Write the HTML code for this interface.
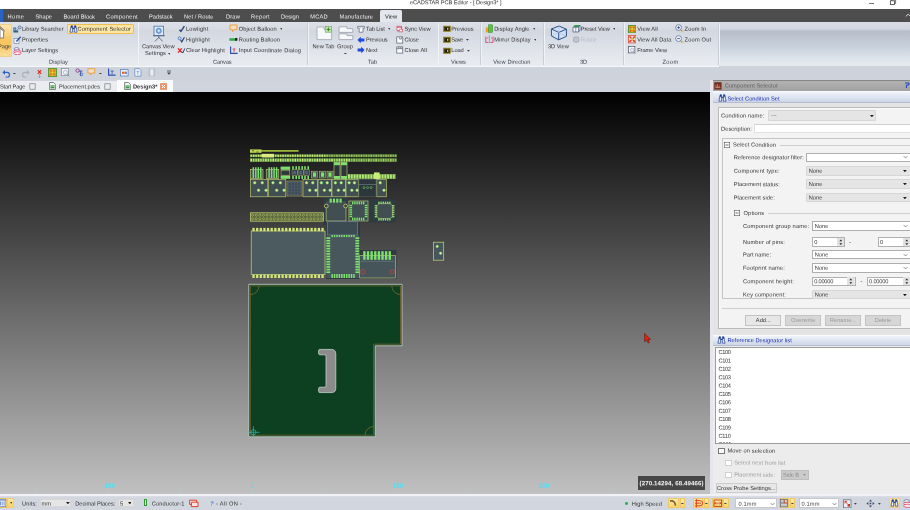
<!DOCTYPE html><html><head><meta charset="utf-8"><title>eCADSTAR PCB Editor</title><style>
*{box-sizing:border-box;margin:0;padding:0}
html,body{width:910px;height:510px;overflow:hidden;background:#fff}
body{font-family:"Liberation Sans",sans-serif;font-size:5.7px;color:#333;position:relative;line-height:1;filter:blur(0.4px)}
.t{-webkit-text-stroke:0}
.a{position:absolute;white-space:nowrap}
.t{position:absolute;white-space:nowrap;line-height:8px;height:8px;transform-origin:0 0}
.m{color:#f2f2f2}
.lbl{color:#3c424c}
.sep{position:absolute;top:23px;height:42px;width:0.8px;background:#c9cdd6;border-right:0.9px solid #f1f3f6;box-sizing:content-box}
.dd{position:absolute;background:#e5e5e5;border:1px solid #d6d6d6;border-radius:1px}
.cb{position:absolute;background:#fff;border:1px solid #adadad}
.btn{position:absolute;background:#e7e7e7;border:1px solid #c2c2c2;text-align:center;line-height:9.5px}
.dis{color:#9a9a9a}
.arr{position:absolute;width:0;height:0;border-left:1.9px solid transparent;border-right:1.9px solid transparent;border-top:2.3px solid #222}
.sarr{position:absolute;width:0;height:0;border-left:1.5px solid transparent;border-right:1.5px solid transparent;border-top:1.9px solid #3a3f4a}
.chk{position:absolute;width:6.4px;height:6.4px;background:#fff;border:1px solid #777}
</style></head><body>
<div class="a" style="left:0px;top:0px;width:910px;height:9px;background:#fff"></div>
<div class="t " style="left:410px;top:-2px;transform:translate(0.00px,0.20px) rotate(0.06deg);letter-spacing:-0.076px;color:#333">eCADSTAR PCB Editor - [ Design3* ]</div>
<div class="a" style="left:868.5px;top:2.9px;width:5.4px;height:0.8px;background:#777"></div>
<svg class="a" style="left:889px;top:-0.6px" width="9" height="7" viewBox="0 0 9 7"><rect x="1.4" y="1.8" width="4" height="3.8" fill="none" stroke="#444" stroke-width="0.8"/><path d="M2.6 1.8V0.8H6.6V4.4H5.4" fill="none" stroke="#444" stroke-width="0.7"/></svg>
<div class="a" style="left:0px;top:9px;width:910px;height:13px;background:#4d4d4d"></div>
<div class="a" style="left:0px;top:9px;width:2.5px;height:13px;background:#2b63c4"></div>
<div class="a" style="left:380px;top:10.3px;width:22.3px;height:12px;background:#e3e6ec;border-radius:1.5px 1.5px 0 0"></div>
<div class="t m" style="left:7px;top:12px;transform:translate(0.50px,0.60px) rotate(0.06deg);letter-spacing:0.457px;">Home</div>
<div class="t m" style="left:35px;top:12px;transform:translate(0.50px,0.60px) rotate(0.06deg);letter-spacing:0.009px;">Shape</div>
<div class="t m" style="left:63px;top:12px;transform:translate(0.50px,0.60px) rotate(0.06deg);letter-spacing:0.075px;">Board Block</div>
<div class="t m" style="left:106px;top:12px;transform:translate(0.00px,0.60px) rotate(0.06deg);letter-spacing:0.288px;">Component</div>
<div class="t m" style="left:149px;top:12px;transform:translate(0.00px,0.60px) rotate(0.06deg);letter-spacing:0.012px;">Padstack</div>
<div class="t m" style="left:184px;top:12px;transform:translate(0.00px,0.60px) rotate(0.06deg);letter-spacing:0.065px;">Net / Route</div>
<div class="t m" style="left:226px;top:12px;transform:translate(0.00px,0.60px) rotate(0.06deg);letter-spacing:0.180px;">Draw</div>
<div class="t m" style="left:251px;top:12px;transform:translate(0.00px,0.60px) rotate(0.06deg);letter-spacing:0.320px;">Report</div>
<div class="t m" style="left:281px;top:12px;transform:translate(0.00px,0.60px) rotate(0.06deg);letter-spacing:0.047px;">Design</div>
<div class="t m" style="left:310px;top:12px;transform:translate(0.30px,0.60px) rotate(0.06deg);letter-spacing:0.162px;">MCAD</div>
<div class="t m" style="left:339px;top:12px;transform:translate(0.60px,0.60px) rotate(0.06deg);letter-spacing:0.180px;">Manufacture</div>
<div class="t " style="left:385px;top:12px;transform:translate(0.00px,0.60px) rotate(0.06deg);letter-spacing:-0.059px;color:#222">View</div>
<svg class="a" style="left:905px;top:13.4px" width="7" height="5" viewBox="0 0 7 5"><path d="M0.8 3.4L3.2 1.2L5.6 3.4" fill="none" stroke="#d8d8d8" stroke-width="1"/></svg>
<div class="a" style="left:0px;top:22px;width:910px;height:44px;background:linear-gradient(#dde0e8 0%,#d9dce5 14%,#d3d7e0 20%,#dadee6 45%,#e3e6ec 75%,#e9ecf0 100%)"></div>
<div class="a" style="left:719px;top:22px;width:191px;height:44px;background:linear-gradient(#d9dae4 0%,#d4d7e1 16%,#b7bdc9 21%,#c0c8d4 40%,#cdd5e0 64%,#dde3ea 82%,#e5e9ee 95%)"></div>
<div class="sep" style="left:137.5px"></div>
<div class="sep" style="left:307px"></div>
<div class="sep" style="left:437.5px"></div>
<div class="sep" style="left:479.8px"></div>
<div class="sep" style="left:543px"></div>
<div class="sep" style="left:622.8px"></div>
<div class="sep" style="left:718px"></div>
<div class="a" style="left:0px;top:23.5px;width:11.5px;height:33.5px;background:linear-gradient(#fde6b4,#f9c762 45%,#f8c45c 60%,#fbdc98);border:1px solid #f0cf8c;border-left:0"></div>
<svg class="a" style="left:0;top:25px" width="6" height="15" viewBox="0 0 6 15"><path d="M0 3L3.6 6.4V13H0Z" fill="#fff" stroke="#555" stroke-width="0.7"/><path d="M0 1.5L4.6 6" stroke="#555" stroke-width="1" fill="none"/></svg>
<div class="t " style="left:0px;top:42px;transform:translate(0.00px,0.30px) rotate(0.06deg);margin-left:-2.5px">Page</div>
<div class="a" style="left:66.5px;top:23.5px;width:67.2px;height:10px;background:#fde6a4;border:0.6px solid #f0bd55;border-radius:1px"></div>
<svg class="a" style="left:13px;top:24.5px" width="9" height="8" viewBox="0 0 9 8"><path d="M0.4 2.6H3.2V5.6H5.2V7.6H0.4Z" fill="#2f5f80"/><rect x="1.2" y="3.4" width="1.4" height="2" fill="#9cc0d8"/><circle cx="6.6" cy="2.4" r="1.5" fill="#eef3fa" stroke="#3a5a9a" stroke-width="0.7"/><path d="M6.2 1.6V3H7.2" stroke="#3a5a9a" stroke-width="0.5" fill="none"/><path d="M5.4 3.6L4.4 4.8" stroke="#3a5a9a" stroke-width="0.8"/></svg>
<svg class="a" style="left:13px;top:35.5px" width="9" height="8" viewBox="0 0 9 8"><rect x="1" y="2.4" width="5" height="5" fill="#f4f6fa" stroke="#7b8aa6" stroke-width="0.7"/><path d="M3.4 5.4L7.6 0.8" stroke="#2d56a8" stroke-width="1.5"/></svg>
<svg class="a" style="left:12.5px;top:46.5px" width="9" height="8" viewBox="0 0 9 8"><ellipse cx="3.6" cy="2" rx="2.6" ry="1.4" fill="#eef2f8" stroke="#5a6aa0" stroke-width="0.7"/><ellipse cx="4.4" cy="4.4" rx="3.6" ry="1.5" fill="#fbeef0" stroke="#d8305a" stroke-width="0.7"/><ellipse cx="4.4" cy="6.2" rx="3.6" ry="1.5" fill="#fbeef0" stroke="#d8305a" stroke-width="0.7"/></svg>
<svg class="a" style="left:69px;top:24.5px" width="9" height="8" viewBox="0 0 9 8"><path d="M2.2 0.8L0.9 7.2H3.7L3.5 0.8ZM5.5 0.8L5.3 7.2H8.1L6.8 0.8Z" fill="#e4ecf8" stroke="#233f8c" stroke-width="0.7"/><path d="M2.1 0.8H3.5V2.8H1.7ZM5.5 0.8H6.9L7.3 2.8H5.5Z" fill="#233f8c"/><path d="M3.6 3.4H5.4" stroke="#233f8c" stroke-width="1.3"/></svg>
<div class="t " style="left:22px;top:24px;transform:translate(0.00px,0.75px) rotate(0.06deg);letter-spacing:-0.034px;">Library Searcher</div>
<div class="t " style="left:22px;top:35px;transform:translate(0.00px,0.40px) rotate(0.06deg);letter-spacing:0.008px;">Properties</div>
<div class="t " style="left:22px;top:46px;transform:translate(0.00px,0.10px) rotate(0.06deg);letter-spacing:-0.026px;">Layer Settings</div>
<div class="t " style="left:77px;top:24px;transform:translate(0.50px,0.75px) rotate(0.06deg);letter-spacing:0.091px;">Component Selector</div>
<div class="t lbl" style="left:49px;top:57px;transform:translate(0.00px,0.80px) rotate(0.06deg);letter-spacing:0.049px;">Display</div>
<svg class="a" style="left:152px;top:24.5px" width="14" height="17" viewBox="0 0 14 17"><rect x="2" y="1.2" width="9.6" height="9.4" fill="#dbe9f8" stroke="#4d74ad" stroke-width="0.8"/><circle cx="6.8" cy="5.8" r="2.6" fill="#7fb0e6" stroke="#3d6db3" stroke-width="0.6"/><circle cx="6.8" cy="5.8" r="1" fill="#eef5fc"/><path d="M1 10.8H12.8M6.8 10.8V13M6.8 12.4L3 16.4M6.8 12.4L10.6 16.4" stroke="#4a5a78" stroke-width="0.8" fill="none"/></svg>
<div class="t " style="left:142px;top:42px;transform:translate(0.00px,0.30px) rotate(0.06deg);letter-spacing:-0.054px;">Canvas View</div>
<div class="t " style="left:145px;top:49px;transform:translate(0.00px,0.00px) rotate(0.06deg);letter-spacing:0.055px;">Settings</div>
<svg class="a" style="left:167.50px;top:53.00px" width="2.8" height="1.8" viewBox="0 0 2.8 1.8"><path d="M0 0H2.8L1.4 1.8Z" fill="#3a3f4a"/></svg>
<svg class="a" style="left:177.5px;top:24.5px" width="8" height="8" viewBox="0 0 8 8"><path d="M1.4 4.8L2.9 6.3L6.4 1.2" stroke="#2c4474" stroke-width="1.4" fill="none"/></svg>
<svg class="a" style="left:177px;top:35.5px" width="9" height="8" viewBox="0 0 9 8"><circle cx="2.6" cy="2.4" r="1.5" fill="none" stroke="#4a78c8" stroke-width="0.9"/><path d="M3.6 4.2L4.8 5.8L7.4 1.2" stroke="#2c4474" stroke-width="1.2" fill="none"/></svg>
<svg class="a" style="left:176.5px;top:46.5px" width="9" height="8" viewBox="0 0 9 8"><path d="M1 1.4L4.8 5.6M4.8 1.4L1 5.6" stroke="#e0241c" stroke-width="1.4"/><path d="M4.8 4.6L5.8 6L7.8 1.4" stroke="#2c4474" stroke-width="1" fill="none"/></svg>
<div class="t " style="left:186px;top:24px;transform:translate(0.00px,0.75px) rotate(0.06deg);letter-spacing:0.203px;">Lowlight</div>
<div class="t " style="left:186px;top:35px;transform:translate(0.00px,0.40px) rotate(0.06deg);letter-spacing:0.207px;">Highlight</div>
<div class="t " style="left:186px;top:46px;transform:translate(0.00px,0.10px) rotate(0.06deg);letter-spacing:0.113px;">Clear Highlight</div>
<svg class="a" style="left:229px;top:24px" width="9" height="9" viewBox="0 0 9 9"><path d="M1 1H8V5.6H5L3.6 7.6L3.4 5.6H1Z" fill="#efe0c8" stroke="#f0a040" stroke-width="1"/></svg>
<svg class="a" style="left:229px;top:36px" width="9" height="7" viewBox="0 0 9 7"><rect x="0.4" y="2" width="6.4" height="2.8" rx="0.6" fill="#27a54a"/><path d="M0.8 2.7H6" stroke="#7fd890" stroke-width="0.6"/><rect x="6" y="2" width="2.4" height="2.8" rx="0.5" fill="#1c1c1c"/></svg>
<svg class="a" style="left:229px;top:46px" width="9" height="9" viewBox="0 0 9 9"><path d="M1.6 0.6V7.4H8.6" stroke="#2c4fa3" stroke-width="1.1" fill="none"/><path d="M3.6 3H6.6M5.1 3V6" stroke="#c03a5a" stroke-width="0.8"/></svg>
<div class="t " style="left:238px;top:24px;transform:translate(0.80px,0.75px) rotate(0.06deg);letter-spacing:0.071px;">Object Balloon</div>
<svg class="a" style="left:279.50px;top:28.00px" width="2.8" height="1.8" viewBox="0 0 2.8 1.8"><path d="M0 0H2.8L1.4 1.8Z" fill="#3a3f4a"/></svg>
<div class="t " style="left:238px;top:35px;transform:translate(0.80px,0.40px) rotate(0.06deg);letter-spacing:0.069px;">Routing Balloon</div>
<div class="t " style="left:238px;top:46px;transform:translate(0.80px,0.10px) rotate(0.06deg);letter-spacing:0.106px;">Input Coordinate Dialog</div>
<div class="t lbl" style="left:213px;top:57px;transform:translate(0.00px,0.80px) rotate(0.06deg);letter-spacing:-0.116px;">Canvas</div>
<svg class="a" style="left:316px;top:26px" width="17" height="15" viewBox="0 0 17 15"><path d="M1 1H8V3.4H15.6V13.6H1Z" fill="#f7f8fa" stroke="#a9adb6" stroke-width="0.9"/><rect x="9.2" y="0.6" width="6.4" height="5.6" fill="#bfe3a8" stroke="#69a84f" stroke-width="0.6"/><path d="M12.4 1.6V5.2M10.6 3.4H14.2" stroke="#2f8a2a" stroke-width="1"/></svg>
<svg class="a" style="left:337.5px;top:26px" width="16" height="15" viewBox="0 0 16 15"><path d="M1 0.8H9V2.6H14.8V6.4H1Z" fill="#f7f8fa" stroke="#a2a7b1" stroke-width="0.9"/><path d="M1 7.8H9V9.6H14.8V13.6H1Z" fill="#f7f8fa" stroke="#a2a7b1" stroke-width="0.9"/></svg>
<div class="t " style="left:312px;top:42px;transform:translate(0.50px,0.30px) rotate(0.06deg);letter-spacing:-0.004px;">New Tab</div>
<div class="t " style="left:337px;top:42px;transform:translate(0.00px,0.30px) rotate(0.06deg);letter-spacing:0.037px;">Group</div>
<svg class="a" style="left:344.00px;top:52.50px" width="2.8" height="1.8" viewBox="0 0 2.8 1.8"><path d="M0 0H2.8L1.4 1.8Z" fill="#3a3f4a"/></svg>
<svg class="a" style="left:357px;top:24.5px" width="8" height="8" viewBox="0 0 8 8"><path d="M0.6 1.4H7.4V3.2H0.6Z" fill="#fff" stroke="#566079" stroke-width="0.7"/><path d="M2.2 3.2V7.2H6V3.2" fill="#fff" stroke="#566079" stroke-width="0.7"/></svg>
<svg class="a" style="left:357px;top:35.5px" width="8" height="8" viewBox="0 0 8 8"><path d="M0.4 4L3.8 0.8V2.6H7.4V5.4H3.8V7.2Z" fill="#1f49e0"/></svg>
<svg class="a" style="left:357px;top:46.4px" width="8" height="8" viewBox="0 0 8 8"><path d="M7.6 4L4.2 0.8V2.6H0.6V5.4H4.2V7.2Z" fill="#1f49e0"/></svg>
<div class="t " style="left:365px;top:24px;transform:translate(0.90px,0.75px) rotate(0.06deg);letter-spacing:-0.101px;">Tab List</div>
<svg class="a" style="left:387.50px;top:28.00px" width="2.8" height="1.8" viewBox="0 0 2.8 1.8"><path d="M0 0H2.8L1.4 1.8Z" fill="#3a3f4a"/></svg>
<div class="t " style="left:365px;top:35px;transform:translate(0.90px,0.40px) rotate(0.06deg);letter-spacing:-0.055px;">Previous</div>
<div class="t " style="left:365px;top:46px;transform:translate(0.90px,0.10px) rotate(0.06deg);letter-spacing:-0.026px;">Next</div>
<svg class="a" style="left:396px;top:24.5px" width="8" height="8" viewBox="0 0 8 8"><rect x="1" y="1.2" width="4.6" height="4.2" fill="#fff" stroke="#c8283c" stroke-width="0.6"/><path d="M1 2.3H5.6" stroke="#c8283c" stroke-width="0.7"/><path d="M3.2 4.2H6.6V6.8H3.2Z" fill="#fff" stroke="#c8283c" stroke-width="0.6"/><path d="M1.6 6.2L2.6 7.2" stroke="#555" stroke-width="0.5"/></svg>
<svg class="a" style="left:396px;top:35.5px" width="8" height="8" viewBox="0 0 8 8"><rect x="0.8" y="0.9" width="6" height="6.2" fill="#fcfcfd" stroke="#3c4458" stroke-width="0.6"/><path d="M3.6 1.4V3H5.4V1.4" stroke="#3c4458" stroke-width="0.6" fill="none"/></svg>
<svg class="a" style="left:396px;top:46.4px" width="8" height="8" viewBox="0 0 8 8"><rect x="0.8" y="0.9" width="6" height="6.2" fill="#fcfcfd" stroke="#3c4458" stroke-width="0.6"/><path d="M0.8 2.7H6.8M2.8 0.9V2.7M4.8 0.9V2.7" stroke="#3c4458" stroke-width="0.6" fill="none"/></svg>
<div class="t " style="left:404px;top:24px;transform:translate(0.50px,0.75px) rotate(0.06deg);letter-spacing:-0.039px;">Sync View</div>
<div class="t " style="left:404px;top:35px;transform:translate(0.50px,0.40px) rotate(0.06deg);letter-spacing:-0.009px;">Close</div>
<div class="t " style="left:404px;top:46px;transform:translate(0.50px,0.10px) rotate(0.06deg);letter-spacing:0.040px;">Close All</div>
<div class="t lbl" style="left:368px;top:57px;transform:translate(0.00px,0.80px) rotate(0.06deg);letter-spacing:-0.057px;">Tab</div>
<svg class="a" style="left:442.5px;top:25.25px" width="8" height="8" viewBox="0 0 8 8"><rect x="0.4" y="1.1" width="7" height="5.4" fill="#4e420a" stroke="#a4942c" stroke-width="0.7"/><rect x="2.6" y="2.4" width="2.8" height="2.8" fill="#111"/><rect x="4.2" y="2.8" width="1" height="2" fill="#f4f4f4"/></svg>
<svg class="a" style="left:442.5px;top:35.9px" width="8" height="8" viewBox="0 0 8 8"><rect x="0.4" y="1.1" width="7" height="5.4" fill="#4e420a" stroke="#a4942c" stroke-width="0.7"/><rect x="2.6" y="2.4" width="2.8" height="2.8" fill="#111"/><rect x="4.2" y="2.8" width="1" height="2" fill="#f4f4f4"/></svg>
<svg class="a" style="left:442.5px;top:46.6px" width="8" height="8" viewBox="0 0 8 8"><rect x="0.4" y="1.1" width="7" height="5.4" fill="#4e420a" stroke="#a4942c" stroke-width="0.7"/><rect x="2.6" y="2.4" width="2.8" height="2.8" fill="#111"/><rect x="4.2" y="2.8" width="1" height="2" fill="#f4f4f4"/></svg>
<div class="t " style="left:451px;top:24px;transform:translate(0.30px,0.75px) rotate(0.06deg);letter-spacing:0.007px;">Previous</div>
<div class="t " style="left:451px;top:35px;transform:translate(0.30px,0.40px) rotate(0.06deg);letter-spacing:-0.242px;">Save</div>
<svg class="a" style="left:466.00px;top:39.00px" width="2.8" height="1.8" viewBox="0 0 2.8 1.8"><path d="M0 0H2.8L1.4 1.8Z" fill="#3a3f4a"/></svg>
<div class="t " style="left:451px;top:46px;transform:translate(0.30px,0.10px) rotate(0.06deg);letter-spacing:-0.064px;">Load</div>
<svg class="a" style="left:467.00px;top:50.00px" width="2.8" height="1.8" viewBox="0 0 2.8 1.8"><path d="M0 0H2.8L1.4 1.8Z" fill="#3a3f4a"/></svg>
<div class="t lbl" style="left:451px;top:57px;transform:translate(0.00px,0.80px) rotate(0.06deg);letter-spacing:-0.056px;">Views</div>
<svg class="a" style="left:485px;top:24px" width="9" height="9" viewBox="0 0 9 9"><rect x="0.8" y="3.4" width="3.4" height="5" fill="#f0a030"/><rect x="3.6" y="0.8" width="4" height="7.6" fill="#5cc046" stroke="#2f8a2a" stroke-width="0.5"/></svg>
<svg class="a" style="left:485px;top:35px" width="9" height="9" viewBox="0 0 9 9"><path d="M0.8 1.6V7.4H3.4M5.4 7.4H8V1.6" stroke="#d0305e" stroke-width="0.8" fill="none"/><path d="M4.4 0.6V8.4" stroke="#36518e" stroke-width="0.7" stroke-dasharray="1 0.6"/><path d="M1.8 3H3.4M6 3H7" stroke="#d0305e" stroke-width="0.7"/></svg>
<div class="t " style="left:494px;top:24px;transform:translate(0.20px,0.75px) rotate(0.06deg);letter-spacing:0.072px;">Display Angle</div>
<svg class="a" style="left:532.50px;top:28.00px" width="2.8" height="1.8" viewBox="0 0 2.8 1.8"><path d="M0 0H2.8L1.4 1.8Z" fill="#3a3f4a"/></svg>
<div class="t " style="left:494px;top:35px;transform:translate(0.20px,0.40px) rotate(0.06deg);letter-spacing:0.094px;">Mirror Display</div>
<svg class="a" style="left:533.50px;top:39.00px" width="2.8" height="1.8" viewBox="0 0 2.8 1.8"><path d="M0 0H2.8L1.4 1.8Z" fill="#3a3f4a"/></svg>
<div class="t lbl" style="left:493px;top:57px;transform:translate(0.20px,0.80px) rotate(0.06deg);letter-spacing:0.082px;">View Direction</div>
<svg class="a" style="left:550px;top:25px" width="18" height="16" viewBox="0 0 18 16"><path d="M9 1L16.4 4.2V11.4L8.6 14.8L1.4 11V4Z" fill="#d2e0f3" stroke="#2c4f88" stroke-width="1"/><path d="M1.4 4L8.8 7.4L16.4 4.2M8.8 7.4L8.6 14.8" fill="none" stroke="#2f5590" stroke-width="1"/><path d="M9 1V7.4M1.4 11L8.8 7.4L16.4 11.4" fill="none" stroke="#9dbbe0" stroke-width="0.5"/></svg>
<div class="t " style="left:548px;top:42px;transform:translate(0.00px,0.30px) rotate(0.06deg);letter-spacing:-0.040px;">3D View</div>
<svg class="a" style="left:571.5px;top:24px" width="9" height="9" viewBox="0 0 9 9"><path d="M1 3.2L2.6 1H8L6.6 3.2Z" fill="#35a04a"/><path d="M1 3.2H6.6V8H1ZM6.6 3.2L8 1V6L6.6 8" fill="#f4f7fb" stroke="#44557a" stroke-width="0.7"/><path d="M3.8 3.2V8" stroke="#44557a" stroke-width="0.6"/></svg>
<svg class="a" style="left:571.5px;top:35px" width="9" height="9" viewBox="0 0 9 9"><circle cx="4.2" cy="4.6" r="2.5" fill="#d4d8df" stroke="#b0b5bf" stroke-width="1.6"/><circle cx="4.2" cy="4.6" r="0.9" fill="#b0b5bf"/></svg>
<div class="t " style="left:580px;top:24px;transform:translate(0.70px,0.75px) rotate(0.06deg);letter-spacing:-0.105px;">Preset View</div>
<svg class="a" style="left:612.50px;top:28.00px" width="2.8" height="1.8" viewBox="0 0 2.8 1.8"><path d="M0 0H2.8L1.4 1.8Z" fill="#3a3f4a"/></svg>
<div class="t " style="left:580px;top:35px;transform:translate(0.70px,0.40px) rotate(0.06deg);letter-spacing:-0.061px;color:#b9bdc6">Rotate</div>
<div class="t lbl" style="left:580px;top:57px;transform:translate(0.00px,0.80px) rotate(0.06deg);letter-spacing:-0.141px;">3D</div>
<svg class="a" style="left:627.7px;top:24.5px" width="8.4" height="8.4" viewBox="0 0 9 9"><rect x="0.5" y="0.5" width="8" height="8" fill="#dcb41c" stroke="#4a9232" stroke-width="1"/><path d="M1.8 1.8L7.2 7.2M7.2 1.8L1.8 7.2" stroke="#d8641e" stroke-width="1.5"/><circle cx="4.5" cy="4.5" r="1.2" fill="#ecd040"/></svg>
<svg class="a" style="left:627.7px;top:35.2px" width="8.4" height="8.4" viewBox="0 0 9 9"><rect x="0.5" y="0.5" width="8" height="8" fill="#f6e4e0" stroke="#d85040" stroke-width="0.9"/><path d="M1.6 1.6L7.4 7.4M7.4 1.6L1.6 7.4" stroke="#d83a24" stroke-width="1.6"/><path d="M4.5 1V8M1 4.5H8" stroke="#f6e4e0" stroke-width="0.7"/><circle cx="4.5" cy="4.5" r="1.3" fill="#e8c030"/></svg>
<svg class="a" style="left:627.7px;top:46.2px" width="8.4" height="8.4" viewBox="0 0 9 9"><rect x="0.6" y="0.6" width="6.8" height="6.8" fill="#fbfcfd" stroke="#3c4458" stroke-width="0.7"/><circle cx="4.4" cy="4.4" r="1.9" fill="#eef3fa" stroke="#8a94a8" stroke-width="0.6"/><path d="M5.8 5.8L8 8.2" stroke="#a89458" stroke-width="0.9"/></svg>
<div class="t " style="left:637px;top:24px;transform:translate(0.20px,0.75px) rotate(0.06deg);letter-spacing:0.123px;">View All</div>
<div class="t " style="left:637px;top:35px;transform:translate(0.20px,0.40px) rotate(0.06deg);letter-spacing:0.061px;">View All Data</div>
<div class="t " style="left:637px;top:46px;transform:translate(0.20px,0.10px) rotate(0.06deg);letter-spacing:-0.045px;">Frame View</div>
<svg class="a" style="left:675px;top:24.450000000000003px" width="9" height="9" viewBox="0 0 9 9"><circle cx="3.6" cy="3.6" r="2.9" fill="#f2f7fd" stroke="#4a5f8e" stroke-width="0.7"/><path d="M2.2 3.6H5M3.6 2.2V5" stroke="#2a3d78" stroke-width="0.8"/><path d="M5.8 5.8L7 7" stroke="#4a5f8e" stroke-width="0.8"/><circle cx="7.2" cy="7.2" r="0.9" fill="#f0dc90" stroke="#b09a5a" stroke-width="0.4"/></svg>
<svg class="a" style="left:675px;top:35.1px" width="9" height="9" viewBox="0 0 9 9"><circle cx="3.6" cy="3.6" r="2.9" fill="#f2f7fd" stroke="#4a5f8e" stroke-width="0.7"/><path d="M2.2 3.6H5" stroke="#2a3d78" stroke-width="0.8"/><path d="M5.8 5.8L7 7" stroke="#4a5f8e" stroke-width="0.8"/><circle cx="7.2" cy="7.2" r="0.9" fill="#f0dc90" stroke="#b09a5a" stroke-width="0.4"/></svg>
<div class="t " style="left:684px;top:24px;transform:translate(0.60px,0.75px) rotate(0.06deg);letter-spacing:0.132px;">Zoom In</div>
<div class="t " style="left:684px;top:35px;transform:translate(0.60px,0.40px) rotate(0.06deg);letter-spacing:0.175px;">Zoom Out</div>
<div class="t lbl" style="left:662px;top:57px;transform:translate(0.50px,0.80px) rotate(0.06deg);letter-spacing:0.363px;">Zoom</div>
<div class="a" style="left:0px;top:66px;width:910px;height:15px;background:#ced2db"></div>
<div class="a" style="left:0px;top:65.6px;width:719px;height:0.8px;background:#f6f7f9"></div>
<svg class="a" style="left:2px;top:68.6px" width="9" height="9" viewBox="0 0 9 9"><path d="M2 3.4H5.2A2.3 2.3 0 0 1 5.2 8H3.6" fill="none" stroke="#2a62c8" stroke-width="1.2"/><path d="M0.4 3.4L3 1V5.8Z" fill="#2a62c8"/></svg>
<svg class="a" style="left:13.00px;top:72.70px" width="2.8" height="1.8" viewBox="0 0 2.8 1.8"><path d="M0 0H2.8L1.4 1.8Z" fill="#3a3f4a"/></svg>
<svg class="a" style="left:20.5px;top:68.6px" width="9" height="9" viewBox="0 0 9 9"><path d="M7 3.4H3.8A2.3 2.3 0 0 0 3.8 8H5.4" fill="none" stroke="#a9b0bd" stroke-width="1.1"/><path d="M8.6 3.4L6 1V5.8Z" fill="#a9b0bd"/></svg>
<svg class="a" style="left:35px;top:68.5px" width="9" height="10" viewBox="0 0 9 10"><path d="M2.8 1.2L6.2 4.8M6.2 1.2L2.8 4.8" stroke="#e0281c" stroke-width="1.2"/><path d="M4.5 4.6V8.8M3.2 7.4L4.5 8.8L5.8 7.4" stroke="#8f97a6" stroke-width="0.7" fill="none"/></svg>
<svg class="a" style="left:47.5px;top:68.3px" width="9" height="9" viewBox="0 0 9 9"><rect x="0.4" y="0.4" width="8.2" height="8.2" fill="#dcb41c" stroke="#4a9232" stroke-width="0.9"/><path d="M1.8 1.8L7.2 7.2M7.2 1.8L1.8 7.2" stroke="#d8741e" stroke-width="1.5"/><circle cx="4.5" cy="4.5" r="1.2" fill="#ecd040"/></svg>
<svg class="a" style="left:60.5px;top:68.3px" width="9" height="9" viewBox="0 0 9 9"><rect x="0.6" y="0.6" width="7" height="7" fill="#f2f5f9" stroke="#7a8496" stroke-width="0.7"/><circle cx="4.4" cy="4.4" r="2" fill="none" stroke="#8a94a6" stroke-width="0.6"/><path d="M6 6L8.4 8.6" stroke="#8a94a6" stroke-width="0.9"/></svg>
<svg class="a" style="left:74.5px;top:68.3px" width="9" height="9" viewBox="0 0 9 9"><circle cx="2.6" cy="2.6" r="1.7" fill="none" stroke="#8a3a8a" stroke-width="0.9"/><path d="M4 3H7.4M5.6 3V8" stroke="#3a56a8" stroke-width="0.9" fill="none"/><circle cx="6.4" cy="6.4" r="1.4" fill="none" stroke="#3a56a8" stroke-width="0.7"/></svg>
<svg class="a" style="left:87.3px;top:68.3px" width="9" height="8.1" viewBox="0 0 10 9"><path d="M1 0.8H8.6V5.6H5.4L4 7.8L3.8 5.6H1Z" fill="#efe0c8" stroke="#f0a040" stroke-width="1.1"/></svg>
<svg class="a" style="left:99.00px;top:72.70px" width="2.8" height="1.8" viewBox="0 0 2.8 1.8"><path d="M0 0H2.8L1.4 1.8Z" fill="#3a3f4a"/></svg>
<svg class="a" style="left:106.5px;top:68.3px" width="9" height="9" viewBox="0 0 9 9"><path d="M1.6 0.6V7.2H8.6" stroke="#2c4fb3" stroke-width="1.2" fill="none"/><path d="M3.6 3H6.6M5.1 3V6" stroke="#2c4fb3" stroke-width="0.8"/></svg>
<svg class="a" style="left:120px;top:68.7px" width="9" height="8" viewBox="0 0 9 8"><rect x="0.5" y="0.6" width="7.6" height="6.4" fill="#eef3fa" stroke="#5b82c0" stroke-width="0.8"/><rect x="2" y="2.6" width="2.6" height="2.4" fill="#e06a2a"/><rect x="5" y="2.6" width="2" height="2.4" fill="#6a8ad0"/></svg>
<svg class="a" style="left:134px;top:68.3px" width="8" height="9" viewBox="0 0 8 9"><path d="M0.8 0.6H5L7 2.6V8.2H0.8Z" fill="#eef3fa" stroke="#6b8fc4" stroke-width="0.8"/><path d="M2.6 3.4H5M3.8 3.4V6.6" stroke="#6b8fc4" stroke-width="0.7"/></svg>
<svg class="a" style="left:147.5px;top:68.3px" width="8" height="9" viewBox="0 0 8 9"><path d="M2.4 0.8H1.2V8H2.4M5.2 0.8H6.4V8H5.2" fill="none" stroke="#aab2c0" stroke-width="0.8"/><rect x="2.4" y="1.6" width="2.8" height="5.6" fill="#e9edf3"/></svg>
<svg class="a" style="left:166px;top:70.1px" width="6" height="6" viewBox="0 0 6 6"><path d="M1 1H5" stroke="#3c4250" stroke-width="0.8"/><path d="M1 2.6H5L3 4.8Z" fill="#3c4250"/></svg>
<div class="a" style="left:0px;top:80.6px;width:710px;height:11.4px;background:#d0d4dc"></div>
<div class="a" style="left:0px;top:80.6px;width:116.5px;height:11.4px;background:#eaecf0"></div>
<div class="a" style="left:116.6px;top:80px;width:56.6px;height:12px;background:#fbfcfd"></div>
<div class="t " style="left:0px;top:82px;transform:translate(0.00px,0.50px) rotate(0.06deg);letter-spacing:-0.168px;margin-left:-0.5px">Start Page</div>
<svg class="a" style="left:28.5px;top:82.6px" width="7" height="7" viewBox="0 0 7 7"><rect x="0.7" y="0.7" width="5.6" height="5.6" rx="0.5" fill="#eff0f2" stroke="#a6a9af" stroke-width="1.2"/><path d="M2.5 2.5L4.5 4.5M4.5 2.5L2.5 4.5" stroke="#dcdee2" stroke-width="0.8"/></svg>
<svg class="a" style="left:48.5px;top:82px" width="7" height="8" viewBox="0 0 7 8"><path d="M0.6 0.5H4.4L6.4 2.4V7.5H0.6Z" fill="#f6f8f6" stroke="#4a5a4e" stroke-width="0.7"/><rect x="1.6" y="3.4" width="3.8" height="3" fill="#2f8f3c"/><path d="M2 4.6H5" stroke="#bfe6c2" stroke-width="0.6"/></svg>
<div class="t " style="left:59px;top:82px;transform:translate(0.00px,0.50px) rotate(0.06deg);letter-spacing:0.015px;">Placement.pdes</div>
<svg class="a" style="left:103.5px;top:82.6px" width="7" height="7" viewBox="0 0 7 7"><rect x="0.7" y="0.7" width="5.6" height="5.6" rx="0.5" fill="#eff0f2" stroke="#a6a9af" stroke-width="1.2"/><path d="M2.5 2.5L4.5 4.5M4.5 2.5L2.5 4.5" stroke="#dcdee2" stroke-width="0.8"/></svg>
<svg class="a" style="left:123.5px;top:82px" width="7" height="8" viewBox="0 0 7 8"><path d="M0.6 0.5H4.4L6.4 2.4V7.5H0.6Z" fill="#f6f8f6" stroke="#4a5a4e" stroke-width="0.7"/><rect x="1.6" y="3.4" width="3.8" height="3" fill="#2f8f3c"/><path d="M2 4.6H5" stroke="#bfe6c2" stroke-width="0.6"/></svg>
<div class="t " style="left:133px;top:82px;transform:translate(0.00px,0.50px) rotate(0.06deg);font-weight:bold;letter-spacing:0.020px;">Design3*</div>
<svg class="a" style="left:159.5px;top:82.6px" width="7" height="7" viewBox="0 0 7 7"><rect x="0.2" y="0.2" width="6.6" height="6.6" rx="0.8" fill="#ea9468" stroke="#dc7648" stroke-width="0.5"/><path d="M2 2L5 5M5 2L2 5" stroke="#fff" stroke-width="1"/></svg>
<div class="a" style="left:0px;top:92px;width:709.5px;height:402px;background:linear-gradient(#000,#c1c1c1)"></div>
<svg class="a" style="left:0;top:92px" width="709.5" height="402" viewBox="0 92 709.5 402">
<path d="M248.8 284.3H402V345.8H375.2V436.8H248.8Z" fill="#0c4021" stroke="#c4d8d2" stroke-width="0.8"/>
<path d="M250.3 285.9H400.5V344.2H373.6V435.2H250.3Z" fill="none" stroke="#8a6a32" stroke-width="0.7"/>
<path d="M259 285.9A8.7 8.7 0 0 1 250.3 294.6" fill="none" stroke="#a5723a" stroke-width="0.6"/>
<path d="M391.8 285.9A8.7 8.7 0 0 0 400.5 294.6" fill="none" stroke="#a5723a" stroke-width="0.6"/>
<path d="M365 435.2A8.6 8.6 0 0 1 373.6 426.6" fill="none" stroke="#a5723a" stroke-width="0.6"/>
<path d="M319.8 349.4H331.5Q335.8 349.4 335.8 354V388.2Q335.8 392.6 331.5 392.6H319.8Q318.6 392.6 318.6 391.2V388.6Q318.6 387.2 320 387.2H324.4Q326 387.2 326 385.6V356.4Q326 354.8 324.4 354.8H320Q318.6 354.8 318.6 353.4V350.8Q318.6 349.4 319.8 349.4Z" fill="#8c8c8c" stroke="#d2e2dc" stroke-width="0.7"/>
<g stroke="#35c8c8" stroke-width="0.6" fill="none"><circle cx="253.4" cy="432.3" r="2.6"/><path d="M247.4 432.3H259.6M253.4 426.2V438.4"/></g>
<rect x="323.30" y="197.00" width="24.70" height="28.00" fill="#2f3b40"/>
<rect x="348.00" y="199.50" width="48.00" height="23.00" fill="#2f3b40"/>
<rect x="326.00" y="221.00" width="34.00" height="58.00" fill="#2f3b40"/>
<rect x="359.00" y="250.00" width="37.50" height="29.00" fill="#2f3b40"/>
<rect x="250.00" y="150.10" width="48.60" height="1.60" fill="#a6c63c"/>
<rect x="250.00" y="149.40" width="11.50" height="3.40" fill="#bcd654"/>
<rect x="252.00" y="150.40" width="2.00" height="0.80" fill="#3a4a20"/>
<rect x="256.50" y="151.60" width="2.00" height="0.80" fill="#3a4a20"/>
<rect x="250.00" y="154.30" width="146.50" height="2.80" fill="#4d7434"/>
<rect x="250.00" y="158.30" width="146.50" height="3.60" fill="#4d7434"/>
<rect x="250.40" y="154.60" width="1.60" height="2.30" fill="#a6e27a"/>
<rect x="250.40" y="158.60" width="1.60" height="3.00" fill="#d4e870"/>
<rect x="252.85" y="154.60" width="1.60" height="2.30" fill="#d2e66a"/>
<rect x="252.85" y="158.60" width="1.60" height="3.00" fill="#9fe07a"/>
<rect x="255.30" y="154.60" width="1.60" height="2.30" fill="#a6e27a"/>
<rect x="255.30" y="158.60" width="1.60" height="3.00" fill="#9fe07a"/>
<rect x="257.75" y="154.60" width="1.60" height="2.30" fill="#d2e66a"/>
<rect x="257.75" y="158.60" width="1.60" height="3.00" fill="#d4e870"/>
<rect x="260.20" y="154.60" width="1.60" height="2.30" fill="#a6e27a"/>
<rect x="260.20" y="158.60" width="1.60" height="3.00" fill="#9fe07a"/>
<rect x="262.65" y="154.60" width="1.60" height="2.30" fill="#d2e66a"/>
<rect x="262.65" y="158.60" width="1.60" height="3.00" fill="#9fe07a"/>
<rect x="265.10" y="154.60" width="1.60" height="2.30" fill="#a6e27a"/>
<rect x="265.10" y="158.60" width="1.60" height="3.00" fill="#d4e870"/>
<rect x="267.55" y="154.60" width="1.60" height="2.30" fill="#d2e66a"/>
<rect x="267.55" y="158.60" width="1.60" height="3.00" fill="#9fe07a"/>
<rect x="270.00" y="154.60" width="1.60" height="2.30" fill="#a6e27a"/>
<rect x="270.00" y="158.60" width="1.60" height="3.00" fill="#9fe07a"/>
<rect x="272.45" y="154.60" width="1.60" height="2.30" fill="#d2e66a"/>
<rect x="272.45" y="158.60" width="1.60" height="3.00" fill="#d4e870"/>
<rect x="274.90" y="154.60" width="1.60" height="2.30" fill="#a6e27a"/>
<rect x="274.90" y="158.60" width="1.60" height="3.00" fill="#9fe07a"/>
<rect x="277.35" y="154.60" width="1.60" height="2.30" fill="#d2e66a"/>
<rect x="277.35" y="158.60" width="1.60" height="3.00" fill="#9fe07a"/>
<rect x="279.80" y="154.60" width="1.60" height="2.30" fill="#a6e27a"/>
<rect x="279.80" y="158.60" width="1.60" height="3.00" fill="#d4e870"/>
<rect x="282.25" y="154.60" width="1.60" height="2.30" fill="#d2e66a"/>
<rect x="282.25" y="158.60" width="1.60" height="3.00" fill="#9fe07a"/>
<rect x="284.70" y="154.60" width="1.60" height="2.30" fill="#a6e27a"/>
<rect x="284.70" y="158.60" width="1.60" height="3.00" fill="#9fe07a"/>
<rect x="287.15" y="154.60" width="1.60" height="2.30" fill="#d2e66a"/>
<rect x="287.15" y="158.60" width="1.60" height="3.00" fill="#d4e870"/>
<rect x="289.60" y="154.60" width="1.60" height="2.30" fill="#a6e27a"/>
<rect x="289.60" y="158.60" width="1.60" height="3.00" fill="#9fe07a"/>
<rect x="292.05" y="154.60" width="1.60" height="2.30" fill="#d2e66a"/>
<rect x="292.05" y="158.60" width="1.60" height="3.00" fill="#9fe07a"/>
<rect x="294.50" y="154.60" width="1.60" height="2.30" fill="#a6e27a"/>
<rect x="294.50" y="158.60" width="1.60" height="3.00" fill="#d4e870"/>
<rect x="296.95" y="154.60" width="1.60" height="2.30" fill="#d2e66a"/>
<rect x="296.95" y="158.60" width="1.60" height="3.00" fill="#9fe07a"/>
<rect x="299.40" y="154.60" width="1.60" height="2.30" fill="#a6e27a"/>
<rect x="299.40" y="158.60" width="1.60" height="3.00" fill="#9fe07a"/>
<rect x="301.85" y="154.60" width="1.60" height="2.30" fill="#d2e66a"/>
<rect x="301.85" y="158.60" width="1.60" height="3.00" fill="#d4e870"/>
<rect x="304.30" y="154.60" width="1.60" height="2.30" fill="#a6e27a"/>
<rect x="304.30" y="158.60" width="1.60" height="3.00" fill="#9fe07a"/>
<rect x="306.75" y="154.60" width="1.60" height="2.30" fill="#d2e66a"/>
<rect x="306.75" y="158.60" width="1.60" height="3.00" fill="#9fe07a"/>
<rect x="309.20" y="154.60" width="1.60" height="2.30" fill="#a6e27a"/>
<rect x="309.20" y="158.60" width="1.60" height="3.00" fill="#d4e870"/>
<rect x="311.65" y="154.60" width="1.60" height="2.30" fill="#d2e66a"/>
<rect x="311.65" y="158.60" width="1.60" height="3.00" fill="#9fe07a"/>
<rect x="314.10" y="154.60" width="1.60" height="2.30" fill="#a6e27a"/>
<rect x="314.10" y="158.60" width="1.60" height="3.00" fill="#9fe07a"/>
<rect x="316.55" y="154.60" width="1.60" height="2.30" fill="#d2e66a"/>
<rect x="316.55" y="158.60" width="1.60" height="3.00" fill="#d4e870"/>
<rect x="319.00" y="154.60" width="1.60" height="2.30" fill="#a6e27a"/>
<rect x="319.00" y="158.60" width="1.60" height="3.00" fill="#9fe07a"/>
<rect x="321.45" y="154.60" width="1.60" height="2.30" fill="#d2e66a"/>
<rect x="321.45" y="158.60" width="1.60" height="3.00" fill="#9fe07a"/>
<rect x="323.90" y="154.60" width="1.60" height="2.30" fill="#a6e27a"/>
<rect x="323.90" y="158.60" width="1.60" height="3.00" fill="#d4e870"/>
<rect x="326.35" y="154.60" width="1.60" height="2.30" fill="#a9bd5a"/>
<rect x="326.35" y="158.60" width="1.60" height="3.00" fill="#9fe07a"/>
<rect x="328.80" y="154.60" width="1.60" height="2.30" fill="#7fb45c"/>
<rect x="328.80" y="158.60" width="1.60" height="3.00" fill="#9fe07a"/>
<rect x="331.25" y="154.60" width="1.60" height="2.30" fill="#a9bd5a"/>
<rect x="331.25" y="158.60" width="1.60" height="3.00" fill="#d4e870"/>
<rect x="333.70" y="154.60" width="1.60" height="2.30" fill="#7fb45c"/>
<rect x="333.70" y="158.60" width="1.60" height="3.00" fill="#9fe07a"/>
<rect x="336.15" y="154.60" width="1.60" height="2.30" fill="#a9bd5a"/>
<rect x="336.15" y="158.60" width="1.60" height="3.00" fill="#9fe07a"/>
<rect x="338.60" y="154.60" width="1.60" height="2.30" fill="#7fb45c"/>
<rect x="338.60" y="158.60" width="1.60" height="3.00" fill="#d4e870"/>
<rect x="341.05" y="154.60" width="1.60" height="2.30" fill="#a9bd5a"/>
<rect x="341.05" y="158.60" width="1.60" height="3.00" fill="#9fe07a"/>
<rect x="343.50" y="154.60" width="1.60" height="2.30" fill="#7fb45c"/>
<rect x="343.50" y="158.60" width="1.60" height="3.00" fill="#9fe07a"/>
<rect x="345.95" y="154.60" width="1.60" height="2.30" fill="#a9bd5a"/>
<rect x="345.95" y="158.60" width="1.60" height="3.00" fill="#d4e870"/>
<rect x="348.40" y="154.60" width="1.60" height="2.30" fill="#7fb45c"/>
<rect x="348.40" y="158.60" width="1.60" height="3.00" fill="#9fe07a"/>
<rect x="350.85" y="154.60" width="1.60" height="2.30" fill="#a9bd5a"/>
<rect x="350.85" y="158.60" width="1.60" height="3.00" fill="#86bc60"/>
<rect x="353.30" y="154.60" width="1.60" height="2.30" fill="#7fb45c"/>
<rect x="353.30" y="158.60" width="1.60" height="3.00" fill="#b4c860"/>
<rect x="355.75" y="154.60" width="1.60" height="2.30" fill="#a9bd5a"/>
<rect x="355.75" y="158.60" width="1.60" height="3.00" fill="#86bc60"/>
<rect x="358.20" y="154.60" width="1.60" height="2.30" fill="#7fb45c"/>
<rect x="358.20" y="158.60" width="1.60" height="3.00" fill="#86bc60"/>
<rect x="360.65" y="154.60" width="1.60" height="2.30" fill="#a9bd5a"/>
<rect x="360.65" y="158.60" width="1.60" height="3.00" fill="#b4c860"/>
<rect x="363.10" y="154.60" width="1.60" height="2.30" fill="#7fb45c"/>
<rect x="363.10" y="158.60" width="1.60" height="3.00" fill="#86bc60"/>
<rect x="365.55" y="154.60" width="1.60" height="2.30" fill="#a9bd5a"/>
<rect x="365.55" y="158.60" width="1.60" height="3.00" fill="#86bc60"/>
<rect x="368.00" y="154.60" width="1.60" height="2.30" fill="#7fb45c"/>
<rect x="368.00" y="158.60" width="1.60" height="3.00" fill="#b4c860"/>
<rect x="370.45" y="154.60" width="1.60" height="2.30" fill="#a9bd5a"/>
<rect x="370.45" y="158.60" width="1.60" height="3.00" fill="#86bc60"/>
<rect x="372.90" y="154.60" width="1.60" height="2.30" fill="#7fb45c"/>
<rect x="372.90" y="158.60" width="1.60" height="3.00" fill="#86bc60"/>
<rect x="375.35" y="154.60" width="1.60" height="2.30" fill="#a9bd5a"/>
<rect x="375.35" y="158.60" width="1.60" height="3.00" fill="#b4c860"/>
<rect x="377.80" y="154.60" width="1.60" height="2.30" fill="#7fb45c"/>
<rect x="377.80" y="158.60" width="1.60" height="3.00" fill="#86bc60"/>
<rect x="380.25" y="154.60" width="1.60" height="2.30" fill="#a9bd5a"/>
<rect x="380.25" y="158.60" width="1.60" height="3.00" fill="#86bc60"/>
<rect x="382.70" y="154.60" width="1.60" height="2.30" fill="#7fb45c"/>
<rect x="382.70" y="158.60" width="1.60" height="3.00" fill="#b4c860"/>
<rect x="385.15" y="154.60" width="1.60" height="2.30" fill="#a9bd5a"/>
<rect x="385.15" y="158.60" width="1.60" height="3.00" fill="#86bc60"/>
<rect x="387.60" y="154.60" width="1.60" height="2.30" fill="#7fb45c"/>
<rect x="387.60" y="158.60" width="1.60" height="3.00" fill="#86bc60"/>
<rect x="390.05" y="154.60" width="1.60" height="2.30" fill="#a9bd5a"/>
<rect x="390.05" y="158.60" width="1.60" height="3.00" fill="#b4c860"/>
<rect x="392.50" y="154.60" width="1.60" height="2.30" fill="#7fb45c"/>
<rect x="392.50" y="158.60" width="1.60" height="3.00" fill="#86bc60"/>
<rect x="394.95" y="154.60" width="1.60" height="2.30" fill="#a9bd5a"/>
<rect x="394.95" y="158.60" width="1.60" height="3.00" fill="#86bc60"/>
<rect x="261.70" y="153.80" width="12.30" height="3.70" fill="#dcec80"/>
<rect x="334.00" y="162.60" width="6.00" height="15.80" fill="#2b353a" stroke="#c9d676" stroke-width="0.6"/>
<rect x="341.00" y="162.60" width="6.00" height="15.80" fill="#2b353a" stroke="#c9d676" stroke-width="0.6"/>
<rect x="334.00" y="162.40" width="6.00" height="2.80" fill="#7fe070"/>
<rect x="334.00" y="176.00" width="6.00" height="2.80" fill="#7fe070"/>
<rect x="341.00" y="162.40" width="6.00" height="2.80" fill="#7fe070"/>
<rect x="341.00" y="176.00" width="6.00" height="2.80" fill="#7fe070"/>
<rect x="250.40" y="169.60" width="12.60" height="8.80" fill="#414f53" stroke="#c9d676" stroke-width="0.6"/>
<rect x="252.60" y="167.20" width="1.40" height="10.80" fill="#7fe070"/>
<rect x="255.10" y="167.20" width="1.40" height="10.80" fill="#7fe070"/>
<rect x="257.60" y="167.20" width="1.40" height="10.80" fill="#7fe070"/>
<rect x="260.10" y="167.20" width="1.40" height="10.80" fill="#7fe070"/>
<rect x="266.20" y="169.60" width="12.60" height="8.80" fill="#414f53" stroke="#c9d676" stroke-width="0.6"/>
<rect x="268.40" y="167.20" width="1.40" height="10.80" fill="#7fe070"/>
<rect x="270.90" y="167.20" width="1.40" height="10.80" fill="#7fe070"/>
<rect x="273.40" y="167.20" width="1.40" height="10.80" fill="#7fe070"/>
<rect x="275.90" y="167.20" width="1.40" height="10.80" fill="#7fe070"/>
<rect x="280.60" y="166.60" width="9.60" height="3.20" fill="#7fe070"/>
<rect x="280.60" y="175.60" width="9.60" height="3.20" fill="#7fe070"/>
<rect x="281.00" y="170.20" width="8.80" height="5.00" fill="#2e393d" stroke="#c9d676" stroke-width="0.5"/>
<rect x="292.20" y="166.20" width="1.60" height="3.40" fill="#7fe070"/>
<rect x="295.40" y="166.20" width="1.60" height="3.40" fill="#7fe070"/>
<rect x="292.20" y="175.80" width="1.60" height="3.20" fill="#7fe070"/>
<rect x="295.40" y="175.80" width="1.60" height="3.20" fill="#7fe070"/>
<rect x="292.00" y="169.80" width="5.20" height="5.80" fill="#333f4a" stroke="#c9d676" stroke-width="0.4"/>
<rect x="293.40" y="171.00" width="2.40" height="3.40" fill="#55657a"/>
<rect x="298.20" y="166.20" width="1.60" height="3.40" fill="#7fe070"/>
<rect x="301.40" y="166.20" width="1.60" height="3.40" fill="#7fe070"/>
<rect x="298.20" y="175.80" width="1.60" height="3.20" fill="#7fe070"/>
<rect x="301.40" y="175.80" width="1.60" height="3.20" fill="#7fe070"/>
<rect x="298.00" y="169.80" width="5.20" height="5.80" fill="#333f4a" stroke="#c9d676" stroke-width="0.4"/>
<rect x="299.40" y="171.00" width="2.40" height="3.40" fill="#55657a"/>
<rect x="304.20" y="166.20" width="1.60" height="3.40" fill="#7fe070"/>
<rect x="307.40" y="166.20" width="1.60" height="3.40" fill="#7fe070"/>
<rect x="304.20" y="175.80" width="1.60" height="3.20" fill="#7fe070"/>
<rect x="307.40" y="175.80" width="1.60" height="3.20" fill="#7fe070"/>
<rect x="304.00" y="169.80" width="5.20" height="5.80" fill="#333f4a" stroke="#c9d676" stroke-width="0.4"/>
<rect x="305.40" y="171.00" width="2.40" height="3.40" fill="#55657a"/>
<rect x="311.50" y="171.20" width="6.00" height="6.80" fill="#3a4846" stroke="#c9d676" stroke-width="0.5"/>
<rect x="312.90" y="172.40" width="3.20" height="4.40" fill="#7fe070"/>
<rect x="319.50" y="171.20" width="6.00" height="6.80" fill="#3a4846" stroke="#c9d676" stroke-width="0.5"/>
<rect x="320.90" y="172.40" width="3.20" height="4.40" fill="#7fe070"/>
<rect x="327.00" y="171.20" width="6.00" height="6.80" fill="#3a4846" stroke="#c9d676" stroke-width="0.5"/>
<rect x="328.40" y="172.40" width="3.20" height="4.40" fill="#7fe070"/>
<rect x="347.50" y="174.00" width="48.50" height="5.00" fill="#59823a"/>
<rect x="348.00" y="174.40" width="1.90" height="4.20" fill="#b4e67a"/>
<rect x="350.80" y="174.40" width="1.90" height="4.20" fill="#b4e67a"/>
<rect x="353.60" y="174.40" width="1.90" height="4.20" fill="#b4e67a"/>
<rect x="356.40" y="174.40" width="1.90" height="4.20" fill="#b4e67a"/>
<rect x="359.20" y="174.40" width="1.90" height="4.20" fill="#b4e67a"/>
<rect x="362.00" y="174.40" width="1.90" height="4.20" fill="#b4e67a"/>
<rect x="364.80" y="174.40" width="1.90" height="4.20" fill="#b4e67a"/>
<rect x="367.60" y="174.40" width="1.90" height="4.20" fill="#b4e67a"/>
<rect x="370.40" y="174.40" width="1.90" height="4.20" fill="#b4e67a"/>
<rect x="373.20" y="174.40" width="1.90" height="4.20" fill="#b4e67a"/>
<rect x="376.00" y="174.40" width="1.90" height="4.20" fill="#b4e67a"/>
<rect x="378.80" y="174.40" width="1.90" height="4.20" fill="#b4e67a"/>
<rect x="381.60" y="174.40" width="1.90" height="4.20" fill="#b4e67a"/>
<rect x="384.40" y="174.40" width="1.90" height="4.20" fill="#b4e67a"/>
<rect x="387.20" y="174.40" width="1.90" height="4.20" fill="#b4e67a"/>
<rect x="390.00" y="174.40" width="1.90" height="4.20" fill="#b4e67a"/>
<rect x="392.80" y="174.40" width="1.90" height="4.20" fill="#b4e67a"/>
<rect x="374.00" y="172.40" width="5.60" height="6.60" fill="#c6ec7a"/>
<rect x="250.40" y="179.40" width="17.40" height="17.40" fill="#414f53" stroke="#c9d676" stroke-width="0.6"/>
<circle cx="254.75" cy="182.80" r="1.25" fill="#e4f0a0" stroke="#7fe070" stroke-width="0.5"/>
<circle cx="262.23" cy="182.80" r="1.25" fill="#e4f0a0" stroke="#7fe070" stroke-width="0.5"/>
<circle cx="258.58" cy="190.20" r="1.25" fill="#e4f0a0" stroke="#7fe070" stroke-width="0.5"/>
<circle cx="266.06" cy="190.20" r="1.25" fill="#e4f0a0" stroke="#7fe070" stroke-width="0.5"/>
<rect x="268.70" y="179.40" width="17.10" height="17.40" fill="#414f53" stroke="#c9d676" stroke-width="0.6"/>
<circle cx="272.98" cy="182.80" r="1.25" fill="#e4f0a0" stroke="#7fe070" stroke-width="0.5"/>
<circle cx="280.33" cy="182.80" r="1.25" fill="#e4f0a0" stroke="#7fe070" stroke-width="0.5"/>
<circle cx="276.74" cy="190.20" r="1.25" fill="#e4f0a0" stroke="#7fe070" stroke-width="0.5"/>
<circle cx="284.09" cy="190.20" r="1.25" fill="#e4f0a0" stroke="#7fe070" stroke-width="0.5"/>
<rect x="303.00" y="179.40" width="14.40" height="17.40" fill="#414f53" stroke="#c9d676" stroke-width="0.6"/>
<circle cx="306.60" cy="182.80" r="1.25" fill="#e4f0a0" stroke="#7fe070" stroke-width="0.5"/>
<circle cx="312.79" cy="182.80" r="1.25" fill="#e4f0a0" stroke="#7fe070" stroke-width="0.5"/>
<circle cx="309.77" cy="190.20" r="1.25" fill="#e4f0a0" stroke="#7fe070" stroke-width="0.5"/>
<circle cx="315.96" cy="190.20" r="1.25" fill="#e4f0a0" stroke="#7fe070" stroke-width="0.5"/>
<rect x="318.00" y="179.40" width="13.50" height="17.40" fill="#414f53" stroke="#c9d676" stroke-width="0.6"/>
<circle cx="321.38" cy="182.80" r="1.25" fill="#e4f0a0" stroke="#7fe070" stroke-width="0.5"/>
<circle cx="327.18" cy="182.80" r="1.25" fill="#e4f0a0" stroke="#7fe070" stroke-width="0.5"/>
<circle cx="324.35" cy="190.20" r="1.25" fill="#e4f0a0" stroke="#7fe070" stroke-width="0.5"/>
<circle cx="330.15" cy="190.20" r="1.25" fill="#e4f0a0" stroke="#7fe070" stroke-width="0.5"/>
<rect x="332.00" y="179.40" width="13.50" height="17.40" fill="#414f53" stroke="#c9d676" stroke-width="0.6"/>
<circle cx="335.38" cy="182.80" r="1.25" fill="#e4f0a0" stroke="#7fe070" stroke-width="0.5"/>
<circle cx="341.18" cy="182.80" r="1.25" fill="#e4f0a0" stroke="#7fe070" stroke-width="0.5"/>
<circle cx="338.35" cy="190.20" r="1.25" fill="#e4f0a0" stroke="#7fe070" stroke-width="0.5"/>
<circle cx="344.15" cy="190.20" r="1.25" fill="#e4f0a0" stroke="#7fe070" stroke-width="0.5"/>
<rect x="346.00" y="179.40" width="12.40" height="17.40" fill="#414f53" stroke="#c9d676" stroke-width="0.6"/>
<circle cx="349.10" cy="182.80" r="1.25" fill="#e4f0a0" stroke="#7fe070" stroke-width="0.5"/>
<circle cx="354.43" cy="182.80" r="1.25" fill="#e4f0a0" stroke="#7fe070" stroke-width="0.5"/>
<circle cx="351.83" cy="190.20" r="1.25" fill="#e4f0a0" stroke="#7fe070" stroke-width="0.5"/>
<circle cx="357.16" cy="190.20" r="1.25" fill="#e4f0a0" stroke="#7fe070" stroke-width="0.5"/>
<rect x="376.80" y="179.40" width="9.70" height="17.40" fill="#414f53" stroke="#c9d676" stroke-width="0.6"/>
<circle cx="380.20" cy="182.80" r="1.25" fill="#e4f0a0" stroke="#7fe070" stroke-width="0.5"/>
<circle cx="384.00" cy="190.20" r="1.25" fill="#e4f0a0" stroke="#7fe070" stroke-width="0.5"/>
<rect x="287.00" y="181.00" width="15.00" height="15.00" fill="#323e44" stroke="#c9d676" stroke-width="0.5"/>
<rect x="288.60" y="182.60" width="11.80" height="11.80" fill="#3f4d58" stroke="#67768a" stroke-width="0.4"/>
<path d="M291.55 182.6V194.4M288.6 185.55H300.4" stroke="#5f6e80" stroke-width="0.3"/>
<path d="M294.50 182.6V194.4M288.6 188.50H300.4" stroke="#5f6e80" stroke-width="0.3"/>
<path d="M297.45 182.6V194.4M288.6 191.45H300.4" stroke="#5f6e80" stroke-width="0.3"/>
<rect x="358.90" y="179.40" width="17.10" height="17.40" fill="#2c363b" stroke="#56666a" stroke-width="0.5"/>
<path d="M358.9 184.5H376" stroke="#7f95a0" stroke-width="0.5"/>
<circle cx="364.00" cy="187.60" r="1" fill="none" stroke="#7fe070" stroke-width="0.5"/>
<circle cx="367.60" cy="187.60" r="1" fill="none" stroke="#7fe070" stroke-width="0.5"/>
<circle cx="371.20" cy="187.60" r="1" fill="none" stroke="#7fe070" stroke-width="0.5"/>
<rect x="326.20" y="200.90" width="19.80" height="20.10" fill="#414f53"/>
<path d="M326.2 207.8V221H346V207.8" fill="none" stroke="#c9d676" stroke-width="0.6"/>
<rect x="329.60" y="198.60" width="2.20" height="4.00" fill="#7fe070"/>
<rect x="332.90" y="198.60" width="2.20" height="4.00" fill="#7fe070"/>
<rect x="336.20" y="198.60" width="2.20" height="4.00" fill="#7fe070"/>
<rect x="339.50" y="198.60" width="2.20" height="4.00" fill="#7fe070"/>
<circle cx="326.30" cy="206.00" r="1.9" fill="#2f3b40" stroke="#c9d676" stroke-width="0.8"/>
<circle cx="345.60" cy="206.00" r="1.9" fill="#2f3b40" stroke="#c9d676" stroke-width="0.8"/>
<rect x="348.90" y="201.00" width="19.10" height="20.00" fill="#3b494d" stroke="#c9d676" stroke-width="0.6"/>
<rect x="352.00" y="201.60" width="1.40" height="2.80" fill="#7fe070"/>
<rect x="352.00" y="217.60" width="1.40" height="2.80" fill="#7fe070"/>
<rect x="349.50" y="204.80" width="2.70" height="1.40" fill="#7fe070"/>
<rect x="364.70" y="204.80" width="2.70" height="1.40" fill="#7fe070"/>
<rect x="354.20" y="201.60" width="1.40" height="2.80" fill="#7fe070"/>
<rect x="354.20" y="217.60" width="1.40" height="2.80" fill="#7fe070"/>
<rect x="349.50" y="207.00" width="2.70" height="1.40" fill="#7fe070"/>
<rect x="364.70" y="207.00" width="2.70" height="1.40" fill="#7fe070"/>
<rect x="356.40" y="201.60" width="1.40" height="2.80" fill="#7fe070"/>
<rect x="356.40" y="217.60" width="1.40" height="2.80" fill="#7fe070"/>
<rect x="349.50" y="209.20" width="2.70" height="1.40" fill="#7fe070"/>
<rect x="364.70" y="209.20" width="2.70" height="1.40" fill="#7fe070"/>
<rect x="358.60" y="201.60" width="1.40" height="2.80" fill="#7fe070"/>
<rect x="358.60" y="217.60" width="1.40" height="2.80" fill="#7fe070"/>
<rect x="349.50" y="211.40" width="2.70" height="1.40" fill="#7fe070"/>
<rect x="364.70" y="211.40" width="2.70" height="1.40" fill="#7fe070"/>
<rect x="360.80" y="201.60" width="1.40" height="2.80" fill="#7fe070"/>
<rect x="360.80" y="217.60" width="1.40" height="2.80" fill="#7fe070"/>
<rect x="349.50" y="213.60" width="2.70" height="1.40" fill="#7fe070"/>
<rect x="364.70" y="213.60" width="2.70" height="1.40" fill="#7fe070"/>
<rect x="363.00" y="201.60" width="1.40" height="2.80" fill="#7fe070"/>
<rect x="363.00" y="217.60" width="1.40" height="2.80" fill="#7fe070"/>
<rect x="349.50" y="215.80" width="2.70" height="1.40" fill="#7fe070"/>
<rect x="364.70" y="215.80" width="2.70" height="1.40" fill="#7fe070"/>
<rect x="353.00" y="205.00" width="11.00" height="12.00" fill="#414f53"/>
<rect x="378.20" y="201.60" width="1.40" height="2.40" fill="#7fe070"/>
<rect x="378.20" y="218.20" width="1.40" height="2.40" fill="#7fe070"/>
<rect x="374.70" y="205.00" width="2.50" height="1.40" fill="#7fe070"/>
<rect x="391.80" y="205.00" width="2.60" height="1.40" fill="#7fe070"/>
<rect x="380.40" y="201.60" width="1.40" height="2.40" fill="#7fe070"/>
<rect x="380.40" y="218.20" width="1.40" height="2.40" fill="#7fe070"/>
<rect x="374.70" y="207.20" width="2.50" height="1.40" fill="#7fe070"/>
<rect x="391.80" y="207.20" width="2.60" height="1.40" fill="#7fe070"/>
<rect x="382.60" y="201.60" width="1.40" height="2.40" fill="#7fe070"/>
<rect x="382.60" y="218.20" width="1.40" height="2.40" fill="#7fe070"/>
<rect x="374.70" y="209.40" width="2.50" height="1.40" fill="#7fe070"/>
<rect x="391.80" y="209.40" width="2.60" height="1.40" fill="#7fe070"/>
<rect x="384.80" y="201.60" width="1.40" height="2.40" fill="#7fe070"/>
<rect x="384.80" y="218.20" width="1.40" height="2.40" fill="#7fe070"/>
<rect x="374.70" y="211.60" width="2.50" height="1.40" fill="#7fe070"/>
<rect x="391.80" y="211.60" width="2.60" height="1.40" fill="#7fe070"/>
<rect x="387.00" y="201.60" width="1.40" height="2.40" fill="#7fe070"/>
<rect x="387.00" y="218.20" width="1.40" height="2.40" fill="#7fe070"/>
<rect x="374.70" y="213.80" width="2.50" height="1.40" fill="#7fe070"/>
<rect x="391.80" y="213.80" width="2.60" height="1.40" fill="#7fe070"/>
<rect x="389.20" y="201.60" width="1.40" height="2.40" fill="#7fe070"/>
<rect x="389.20" y="218.20" width="1.40" height="2.40" fill="#7fe070"/>
<rect x="374.70" y="216.00" width="2.50" height="1.40" fill="#7fe070"/>
<rect x="391.80" y="216.00" width="2.60" height="1.40" fill="#7fe070"/>
<path d="M379 203.6H390.2L392.4 205.8V216.4L390.2 218.6H379L376.8 216.4V205.8Z" fill="#414f53" stroke="#c9d676" stroke-width="0.6"/>
<rect x="250.40" y="212.80" width="73.20" height="8.40" fill="#5c6a3c" stroke="#c9d676" stroke-width="0.7"/>
<circle cx="252.60" cy="215.20" r="0.95" fill="#3a4630" stroke="#d8e880" stroke-width="0.5"/>
<circle cx="252.60" cy="218.80" r="0.95" fill="#3a4630" stroke="#d8e880" stroke-width="0.5"/>
<circle cx="256.23" cy="215.20" r="0.95" fill="#3a4630" stroke="#d8e880" stroke-width="0.5"/>
<circle cx="256.23" cy="218.80" r="0.95" fill="#3a4630" stroke="#d8e880" stroke-width="0.5"/>
<circle cx="259.86" cy="215.20" r="0.95" fill="#3a4630" stroke="#d8e880" stroke-width="0.5"/>
<circle cx="259.86" cy="218.80" r="0.95" fill="#3a4630" stroke="#d8e880" stroke-width="0.5"/>
<circle cx="263.49" cy="215.20" r="0.95" fill="#3a4630" stroke="#d8e880" stroke-width="0.5"/>
<circle cx="263.49" cy="218.80" r="0.95" fill="#3a4630" stroke="#d8e880" stroke-width="0.5"/>
<circle cx="267.12" cy="215.20" r="0.95" fill="#3a4630" stroke="#d8e880" stroke-width="0.5"/>
<circle cx="267.12" cy="218.80" r="0.95" fill="#3a4630" stroke="#d8e880" stroke-width="0.5"/>
<circle cx="270.75" cy="215.20" r="0.95" fill="#3a4630" stroke="#d8e880" stroke-width="0.5"/>
<circle cx="270.75" cy="218.80" r="0.95" fill="#3a4630" stroke="#d8e880" stroke-width="0.5"/>
<circle cx="274.38" cy="215.20" r="0.95" fill="#3a4630" stroke="#d8e880" stroke-width="0.5"/>
<circle cx="274.38" cy="218.80" r="0.95" fill="#3a4630" stroke="#d8e880" stroke-width="0.5"/>
<circle cx="278.01" cy="215.20" r="0.95" fill="#3a4630" stroke="#d8e880" stroke-width="0.5"/>
<circle cx="278.01" cy="218.80" r="0.95" fill="#3a4630" stroke="#d8e880" stroke-width="0.5"/>
<circle cx="281.64" cy="215.20" r="0.95" fill="#3a4630" stroke="#d8e880" stroke-width="0.5"/>
<circle cx="281.64" cy="218.80" r="0.95" fill="#3a4630" stroke="#d8e880" stroke-width="0.5"/>
<circle cx="285.27" cy="215.20" r="0.95" fill="#3a4630" stroke="#d8e880" stroke-width="0.5"/>
<circle cx="285.27" cy="218.80" r="0.95" fill="#3a4630" stroke="#d8e880" stroke-width="0.5"/>
<circle cx="288.90" cy="215.20" r="0.95" fill="#3a4630" stroke="#d8e880" stroke-width="0.5"/>
<circle cx="288.90" cy="218.80" r="0.95" fill="#3a4630" stroke="#d8e880" stroke-width="0.5"/>
<circle cx="292.53" cy="215.20" r="0.95" fill="#3a4630" stroke="#d8e880" stroke-width="0.5"/>
<circle cx="292.53" cy="218.80" r="0.95" fill="#3a4630" stroke="#d8e880" stroke-width="0.5"/>
<circle cx="296.16" cy="215.20" r="0.95" fill="#3a4630" stroke="#d8e880" stroke-width="0.5"/>
<circle cx="296.16" cy="218.80" r="0.95" fill="#3a4630" stroke="#d8e880" stroke-width="0.5"/>
<circle cx="299.79" cy="215.20" r="0.95" fill="#3a4630" stroke="#d8e880" stroke-width="0.5"/>
<circle cx="299.79" cy="218.80" r="0.95" fill="#3a4630" stroke="#d8e880" stroke-width="0.5"/>
<circle cx="303.42" cy="215.20" r="0.95" fill="#3a4630" stroke="#d8e880" stroke-width="0.5"/>
<circle cx="303.42" cy="218.80" r="0.95" fill="#3a4630" stroke="#d8e880" stroke-width="0.5"/>
<circle cx="307.05" cy="215.20" r="0.95" fill="#3a4630" stroke="#d8e880" stroke-width="0.5"/>
<circle cx="307.05" cy="218.80" r="0.95" fill="#3a4630" stroke="#d8e880" stroke-width="0.5"/>
<circle cx="310.68" cy="215.20" r="0.95" fill="#3a4630" stroke="#d8e880" stroke-width="0.5"/>
<circle cx="310.68" cy="218.80" r="0.95" fill="#3a4630" stroke="#d8e880" stroke-width="0.5"/>
<circle cx="314.31" cy="215.20" r="0.95" fill="#3a4630" stroke="#d8e880" stroke-width="0.5"/>
<circle cx="314.31" cy="218.80" r="0.95" fill="#3a4630" stroke="#d8e880" stroke-width="0.5"/>
<circle cx="317.94" cy="215.20" r="0.95" fill="#3a4630" stroke="#d8e880" stroke-width="0.5"/>
<circle cx="317.94" cy="218.80" r="0.95" fill="#3a4630" stroke="#d8e880" stroke-width="0.5"/>
<circle cx="321.57" cy="215.20" r="0.95" fill="#3a4630" stroke="#d8e880" stroke-width="0.5"/>
<circle cx="321.57" cy="218.80" r="0.95" fill="#3a4630" stroke="#d8e880" stroke-width="0.5"/>
<rect x="251.20" y="231.00" width="73.80" height="43.50" fill="#4b5b5f" stroke="#c9d676" stroke-width="0.7"/>
<rect x="252.40" y="227.90" width="2.30" height="3.30" fill="#d2e878"/>
<rect x="252.40" y="274.60" width="2.30" height="3.40" fill="#d2e878"/>
<rect x="256.03" y="227.90" width="2.30" height="3.30" fill="#d2e878"/>
<rect x="256.03" y="274.60" width="2.30" height="3.40" fill="#d2e878"/>
<rect x="259.66" y="227.90" width="2.30" height="3.30" fill="#d2e878"/>
<rect x="259.66" y="274.60" width="2.30" height="3.40" fill="#d2e878"/>
<rect x="263.29" y="227.90" width="2.30" height="3.30" fill="#d2e878"/>
<rect x="263.29" y="274.60" width="2.30" height="3.40" fill="#d2e878"/>
<rect x="266.92" y="227.90" width="2.30" height="3.30" fill="#d2e878"/>
<rect x="266.92" y="274.60" width="2.30" height="3.40" fill="#d2e878"/>
<rect x="270.55" y="227.90" width="2.30" height="3.30" fill="#d2e878"/>
<rect x="270.55" y="274.60" width="2.30" height="3.40" fill="#d2e878"/>
<rect x="274.18" y="227.90" width="2.30" height="3.30" fill="#d2e878"/>
<rect x="274.18" y="274.60" width="2.30" height="3.40" fill="#d2e878"/>
<rect x="277.81" y="227.90" width="2.30" height="3.30" fill="#d2e878"/>
<rect x="277.81" y="274.60" width="2.30" height="3.40" fill="#d2e878"/>
<rect x="281.44" y="227.90" width="2.30" height="3.30" fill="#d2e878"/>
<rect x="281.44" y="274.60" width="2.30" height="3.40" fill="#d2e878"/>
<rect x="285.07" y="227.90" width="2.30" height="3.30" fill="#d2e878"/>
<rect x="285.07" y="274.60" width="2.30" height="3.40" fill="#d2e878"/>
<rect x="288.70" y="227.90" width="2.30" height="3.30" fill="#d2e878"/>
<rect x="288.70" y="274.60" width="2.30" height="3.40" fill="#d2e878"/>
<rect x="292.33" y="227.90" width="2.30" height="3.30" fill="#d2e878"/>
<rect x="292.33" y="274.60" width="2.30" height="3.40" fill="#d2e878"/>
<rect x="295.96" y="227.90" width="2.30" height="3.30" fill="#d2e878"/>
<rect x="295.96" y="274.60" width="2.30" height="3.40" fill="#d2e878"/>
<rect x="299.59" y="227.90" width="2.30" height="3.30" fill="#d2e878"/>
<rect x="299.59" y="274.60" width="2.30" height="3.40" fill="#d2e878"/>
<rect x="303.22" y="227.90" width="2.30" height="3.30" fill="#d2e878"/>
<rect x="303.22" y="274.60" width="2.30" height="3.40" fill="#d2e878"/>
<rect x="306.85" y="227.90" width="2.30" height="3.30" fill="#d2e878"/>
<rect x="306.85" y="274.60" width="2.30" height="3.40" fill="#d2e878"/>
<rect x="310.48" y="227.90" width="2.30" height="3.30" fill="#d2e878"/>
<rect x="310.48" y="274.60" width="2.30" height="3.40" fill="#d2e878"/>
<rect x="314.11" y="227.90" width="2.30" height="3.30" fill="#d2e878"/>
<rect x="314.11" y="274.60" width="2.30" height="3.40" fill="#d2e878"/>
<rect x="317.74" y="227.90" width="2.30" height="3.30" fill="#d2e878"/>
<rect x="317.74" y="274.60" width="2.30" height="3.40" fill="#d2e878"/>
<rect x="321.37" y="227.90" width="2.30" height="3.30" fill="#d2e878"/>
<rect x="321.37" y="274.60" width="2.30" height="3.40" fill="#d2e878"/>
<rect x="327.60" y="221.70" width="29.90" height="13.20" fill="#3c4a52" stroke="#7d8fa6" stroke-width="0.6"/>
<rect x="326.40" y="234.90" width="32.80" height="43.10" fill="#47575b"/>
<rect x="326.30" y="237.30" width="3.90" height="1.70" fill="#7fe070"/>
<rect x="355.40" y="237.30" width="3.90" height="1.70" fill="#7fe070"/>
<rect x="326.30" y="239.92" width="3.90" height="1.70" fill="#7fe070"/>
<rect x="355.40" y="239.92" width="3.90" height="1.70" fill="#7fe070"/>
<rect x="326.30" y="242.54" width="3.90" height="1.70" fill="#7fe070"/>
<rect x="355.40" y="242.54" width="3.90" height="1.70" fill="#7fe070"/>
<rect x="326.30" y="245.16" width="3.90" height="1.70" fill="#7fe070"/>
<rect x="355.40" y="245.16" width="3.90" height="1.70" fill="#7fe070"/>
<rect x="326.30" y="247.78" width="3.90" height="1.70" fill="#7fe070"/>
<rect x="355.40" y="247.78" width="3.90" height="1.70" fill="#7fe070"/>
<rect x="326.30" y="250.40" width="3.90" height="1.70" fill="#7fe070"/>
<rect x="355.40" y="250.40" width="3.90" height="1.70" fill="#7fe070"/>
<rect x="326.30" y="253.02" width="3.90" height="1.70" fill="#7fe070"/>
<rect x="355.40" y="253.02" width="3.90" height="1.70" fill="#7fe070"/>
<rect x="326.30" y="255.64" width="3.90" height="1.70" fill="#7fe070"/>
<rect x="355.40" y="255.64" width="3.90" height="1.70" fill="#7fe070"/>
<rect x="326.30" y="258.26" width="3.90" height="1.70" fill="#7fe070"/>
<rect x="355.40" y="258.26" width="3.90" height="1.70" fill="#7fe070"/>
<rect x="326.30" y="260.88" width="3.90" height="1.70" fill="#7fe070"/>
<rect x="355.40" y="260.88" width="3.90" height="1.70" fill="#7fe070"/>
<rect x="326.30" y="263.50" width="3.90" height="1.70" fill="#7fe070"/>
<rect x="355.40" y="263.50" width="3.90" height="1.70" fill="#7fe070"/>
<rect x="326.30" y="266.12" width="3.90" height="1.70" fill="#7fe070"/>
<rect x="355.40" y="266.12" width="3.90" height="1.70" fill="#7fe070"/>
<rect x="326.30" y="268.74" width="3.90" height="1.70" fill="#7fe070"/>
<rect x="355.40" y="268.74" width="3.90" height="1.70" fill="#7fe070"/>
<rect x="326.30" y="271.36" width="3.90" height="1.70" fill="#7fe070"/>
<rect x="355.40" y="271.36" width="3.90" height="1.70" fill="#7fe070"/>
<rect x="331.40" y="235.00" width="1.50" height="2.10" fill="#7fe070"/>
<rect x="331.40" y="274.00" width="1.50" height="4.00" fill="#7fe070"/>
<rect x="333.82" y="235.00" width="1.50" height="2.10" fill="#7fe070"/>
<rect x="333.82" y="274.00" width="1.50" height="4.00" fill="#7fe070"/>
<rect x="336.24" y="235.00" width="1.50" height="2.10" fill="#7fe070"/>
<rect x="336.24" y="274.00" width="1.50" height="4.00" fill="#7fe070"/>
<rect x="338.66" y="235.00" width="1.50" height="2.10" fill="#7fe070"/>
<rect x="338.66" y="274.00" width="1.50" height="4.00" fill="#7fe070"/>
<rect x="341.08" y="235.00" width="1.50" height="2.10" fill="#7fe070"/>
<rect x="341.08" y="274.00" width="1.50" height="4.00" fill="#7fe070"/>
<rect x="343.50" y="235.00" width="1.50" height="2.10" fill="#7fe070"/>
<rect x="343.50" y="274.00" width="1.50" height="4.00" fill="#7fe070"/>
<rect x="345.92" y="235.00" width="1.50" height="2.10" fill="#7fe070"/>
<rect x="345.92" y="274.00" width="1.50" height="4.00" fill="#7fe070"/>
<rect x="348.34" y="235.00" width="1.50" height="2.10" fill="#7fe070"/>
<rect x="348.34" y="274.00" width="1.50" height="4.00" fill="#7fe070"/>
<rect x="350.76" y="235.00" width="1.50" height="2.10" fill="#7fe070"/>
<rect x="350.76" y="274.00" width="1.50" height="4.00" fill="#7fe070"/>
<rect x="353.18" y="235.00" width="1.50" height="2.10" fill="#7fe070"/>
<rect x="353.18" y="274.00" width="1.50" height="4.00" fill="#7fe070"/>
<rect x="359.70" y="255.70" width="35.60" height="22.30" fill="#46555a" stroke="#c9d676" stroke-width="0.6"/>
<path d="M361 261.4H394" stroke="#7d8fa0" stroke-width="0.4"/>
<rect x="363.20" y="251.20" width="2.40" height="8.60" fill="#7fe070"/>
<rect x="366.82" y="251.20" width="2.40" height="8.60" fill="#7fe070"/>
<rect x="370.44" y="251.20" width="2.40" height="8.60" fill="#7fe070"/>
<rect x="374.06" y="251.20" width="2.40" height="8.60" fill="#7fe070"/>
<rect x="377.68" y="251.20" width="2.40" height="8.60" fill="#7fe070"/>
<rect x="381.30" y="251.20" width="2.40" height="8.60" fill="#7fe070"/>
<rect x="384.92" y="251.20" width="2.40" height="8.60" fill="#7fe070"/>
<rect x="388.54" y="251.20" width="2.40" height="8.60" fill="#7fe070"/>
<circle cx="362.90" cy="271.80" r="2.2" fill="none" stroke="#d04a3a" stroke-width="0.7"/>
<circle cx="392.20" cy="271.80" r="2.2" fill="none" stroke="#d04a3a" stroke-width="0.7"/>
<rect x="433.40" y="242.20" width="10.30" height="18.00" fill="#46565a" stroke="#c9d676" stroke-width="0.7"/>
<circle cx="437.20" cy="246.40" r="1.2" fill="#e4f0a0" stroke="#7fe070" stroke-width="0.5"/>
<circle cx="440.60" cy="253.20" r="1.2" fill="#e4f0a0" stroke="#7fe070" stroke-width="0.5"/>
<text x="108.7" y="487.7" font-size="6.3" font-weight="bold" fill="#58dcf0" text-anchor="middle" font-family="Liberation Sans, sans-serif">-100</text>
<text x="252.6" y="487.7" font-size="6.3" font-weight="bold" fill="#58dcf0" text-anchor="middle" font-family="Liberation Sans, sans-serif">0</text>
<text x="397.9" y="487.7" font-size="6.3" font-weight="bold" fill="#58dcf0" text-anchor="middle" font-family="Liberation Sans, sans-serif">100</text>
<text x="544" y="487.7" font-size="6.3" font-weight="bold" fill="#58dcf0" text-anchor="middle" font-family="Liberation Sans, sans-serif">200</text>
<path d="M36 490.6V494" stroke="#9cd8e4" stroke-width="0.6" opacity="0.6"/>
<path d="M107.5 490.6V494" stroke="#9cd8e4" stroke-width="0.6" opacity="0.6"/>
<path d="M180.5 490.6V494" stroke="#9cd8e4" stroke-width="0.6" opacity="0.6"/>
<path d="M252.6 490.6V494" stroke="#9cd8e4" stroke-width="0.6" opacity="0.6"/>
<path d="M325 490.6V494" stroke="#9cd8e4" stroke-width="0.6" opacity="0.6"/>
<path d="M397.5 490.6V494" stroke="#9cd8e4" stroke-width="0.6" opacity="0.6"/>
<path d="M470 490.6V494" stroke="#9cd8e4" stroke-width="0.6" opacity="0.6"/>
<path d="M544 490.6V494" stroke="#9cd8e4" stroke-width="0.6" opacity="0.6"/>
<path d="M615 490.6V494" stroke="#9cd8e4" stroke-width="0.6" opacity="0.6"/>
<path d="M644.6 333.4L644.6 341.6L646.6 340L648 343L649.4 342.4L648 339.6L650.6 339.4Z" fill="#e8200c" stroke="#5a0c04" stroke-width="0.5"/>
</svg>
<div class="a" style="left:709.5px;top:80px;width:3.5px;height:414px;background:#e6e7ec"></div>
<div class="a" style="left:712.8px;top:91px;width:1.4px;height:403px;background:#c2c3ca"></div>
<div class="a" style="left:714.2px;top:103px;width:4px;height:231px;background:#e4e4e8"></div>
<div class="a" style="left:713px;top:80px;width:197px;height:11px;background:linear-gradient(#b3b3b3,#a0a0a0);border-top:1px solid #868686"></div>
<svg class="a" style="left:714px;top:81.5px" width="8" height="8" viewBox="0 0 8 8"><rect x="0.2" y="0.2" width="7.4" height="7.4" fill="#74301e"/><path d="M1.4 5.6H6.4M2 5.6V3M3.6 5.6V2M5.2 5.6V3.6" stroke="#d8a088" stroke-width="0.7"/></svg>
<div class="t " style="left:724px;top:81px;transform:translate(0.70px,0.50px) rotate(0.06deg);letter-spacing:0.080px;color:#5f5f5f">Component Selector</div>
<svg class="a" style="left:904px;top:82px" width="6" height="7" viewBox="0 0 6 7"><path d="M1 1H5V3H2.4V6" stroke="#2040c0" stroke-width="1" fill="none"/></svg>
<div class="a" style="left:713px;top:91px;width:197px;height:12px;background:linear-gradient(#eff2f9 0%,#dfe5f1 50%,#cdd5e7 100%);border-bottom:1px solid #b4bccd;border-top:1px solid #fafbfd"></div>
<svg class="a" style="left:717.5px;top:93.8px" width="9" height="8" viewBox="0 0 9 8"><path d="M2.2 0.8L0.9 7.2H3.7L3.5 0.8ZM5.5 0.8L5.3 7.2H8.1L6.8 0.8Z" fill="#e4ecf8" stroke="#233f8c" stroke-width="0.7"/><path d="M2.1 0.8H3.5V2.8H1.7ZM5.5 0.8H6.9L7.3 2.8H5.5Z" fill="#233f8c"/><path d="M3.6 3.4H5.4" stroke="#233f8c" stroke-width="1.3"/></svg>
<div class="t " style="left:727px;top:94px;transform:translate(0.40px,0.40px) rotate(0.06deg);letter-spacing:0.033px;color:#1a2fb0">Select Condition Set</div>
<div class="a" style="left:713px;top:103px;width:197px;height:231.5px;background:#e4e4e4"></div>
<div class="a" style="left:717.8px;top:106.6px;width:196px;height:222.6px;background:#f3f3f3;border:0.6px solid #b9b9b9;box-shadow:inset 0.6px 0.6px 0 #fff"></div>
<div class="t " style="left:721px;top:111px;transform:translate(0.00px,0.50px) rotate(0.06deg);letter-spacing:0.139px;">Condition name:</div>
<div class="dd" style="left:767.8px;top:110px;width:108px;height:10.8px;"></div>
<div class="t " style="left:771px;top:111px;transform:translate(0.00px,0.30px) rotate(0.06deg);color:#777">---</div>
<svg class="a" style="left:869.80px;top:114.60px" width="3.8" height="2.3" viewBox="0 0 3.8 2.3"><path d="M0 0H3.8L1.9 2.3Z" fill="#1e1e1e"/></svg>
<div class="t " style="left:721px;top:124px;transform:translate(0.00px,0.70px) rotate(0.06deg);letter-spacing:0.081px;">Description:</div>
<div class="cb" style="left:754.3px;top:123.9px;width:160px;height:9.6px;border-color:#e0e0e0;border-top-color:#cfcfcf"></div>
<div class="a" style="left:721.6px;top:137.6px;width:195px;height:161.8px;border:0.6px solid #c4c4c4"></div>
<svg class="a" style="left:724px;top:141.7px" width="6" height="6" viewBox="0 0 6 6"><rect x="0.3" y="0.3" width="5.4" height="5.4" fill="#fff" stroke="#555" stroke-width="0.6"/><path d="M1.4 3H4.6" stroke="#333" stroke-width="0.7"/></svg>
<div class="t " style="left:733px;top:140px;transform:translate(0.00px,0.60px) rotate(0.06deg);letter-spacing:0.099px;">Select Condition</div>
<div class="a" style="left:780px;top:144.5px;width:140px;height:0.6px;background:#cfcfcf"></div>
<div class="t " style="left:733px;top:153px;transform:translate(0.80px,0.30px) rotate(0.06deg);letter-spacing:0.061px;">Reference designator filter:</div>
<div class="cb" style="left:806px;top:152.70000000000002px;width:110px;height:9.5px;"></div>
<svg class="a" style="left:903.4px;top:155.4px" width="5" height="4" viewBox="0 0 5 4"><path d="M0.6 1L2.5 3L4.4 1" fill="none" stroke="#555" stroke-width="0.6"/></svg>
<div class="t " style="left:733px;top:166px;transform:translate(0.80px,0.70px) rotate(0.06deg);letter-spacing:0.178px;">Component type:</div>
<div class="dd" style="left:806px;top:166.0px;width:110px;height:9.7px;"></div>
<div class="t " style="left:808px;top:166px;transform:translate(0.70px,0.70px) rotate(0.06deg);">None</div>
<svg class="a" style="left:903.40px;top:169.80px" width="3.8" height="2.3" viewBox="0 0 3.8 2.3"><path d="M0 0H3.8L1.9 2.3Z" fill="#1e1e1e"/></svg>
<div class="t " style="left:733px;top:180px;transform:translate(0.80px,0.10px) rotate(0.06deg);letter-spacing:0.046px;">Placement status:</div>
<div class="dd" style="left:806px;top:179.39999999999998px;width:110px;height:9.7px;"></div>
<div class="t " style="left:808px;top:180px;transform:translate(0.70px,0.10px) rotate(0.06deg);">None</div>
<svg class="a" style="left:903.40px;top:183.20px" width="3.8" height="2.3" viewBox="0 0 3.8 2.3"><path d="M0 0H3.8L1.9 2.3Z" fill="#1e1e1e"/></svg>
<div class="t " style="left:733px;top:193px;transform:translate(0.80px,0.40px) rotate(0.06deg);letter-spacing:0.035px;">Placement side:</div>
<div class="dd" style="left:806px;top:192.7px;width:110px;height:9.7px;"></div>
<div class="t " style="left:808px;top:193px;transform:translate(0.70px,0.40px) rotate(0.06deg);">None</div>
<svg class="a" style="left:903.40px;top:196.50px" width="3.8" height="2.3" viewBox="0 0 3.8 2.3"><path d="M0 0H3.8L1.9 2.3Z" fill="#1e1e1e"/></svg>
<svg class="a" style="left:734.3px;top:210.2px" width="6" height="6" viewBox="0 0 6 6"><rect x="0.3" y="0.3" width="5.4" height="5.4" fill="#fff" stroke="#555" stroke-width="0.6"/><path d="M1.4 3H4.6" stroke="#333" stroke-width="0.7"/></svg>
<div class="t " style="left:743px;top:209px;transform:translate(0.40px,0.10px) rotate(0.06deg);letter-spacing:0.199px;">Options</div>
<div class="a" style="left:768px;top:213px;width:150px;height:0.6px;background:#cfcfcf"></div>
<div class="t " style="left:743px;top:221px;transform:translate(0.00px,0.90px) rotate(0.06deg);letter-spacing:0.156px;">Component group name:</div>
<div class="cb" style="left:812px;top:221.3px;width:110px;height:9.5px;"></div>
<div class="t " style="left:814px;top:221px;transform:translate(0.70px,0.90px) rotate(0.06deg);">None</div>
<svg class="a" style="left:903.4px;top:224px" width="5" height="4" viewBox="0 0 5 4"><path d="M0.6 1L2.5 3L4.4 1" fill="none" stroke="#555" stroke-width="0.6"/></svg>
<div class="t " style="left:743px;top:237px;transform:translate(0.00px,0.90px) rotate(0.06deg);letter-spacing:0.123px;">Number of pins:</div>
<div class="cb" style="left:812px;top:237.2px;width:32.7px;height:9.7px;border-color:#b0b0b0"></div>
<div class="t " style="left:814px;top:237px;transform:translate(0.20px,0.90px) rotate(0.06deg);">0</div>
<svg class="a" style="left:836.5px;top:237.8px" width="7.6" height="8.4" viewBox="0 0 7.6 8.4"><rect x="0" y="0" width="7.6" height="8.4" fill="#e1e1e1"/><path d="M2.4 3.2L3.8 1.4L5.2 3.2Z M2.4 5.2L3.8 7L5.2 5.2Z" fill="#222"/></svg>
<div class="t " style="left:849px;top:237px;transform:translate(0.00px,0.90px) rotate(0.06deg);">-</div>
<div class="cb" style="left:877.9px;top:237.2px;width:33.5px;height:9.7px;border-color:#b0b0b0"></div>
<div class="t " style="left:880px;top:237px;transform:translate(0.10px,0.90px) rotate(0.06deg);">0</div>
<svg class="a" style="left:903.1999999999999px;top:237.8px" width="7.6" height="8.4" viewBox="0 0 7.6 8.4"><rect x="0" y="0" width="7.6" height="8.4" fill="#e1e1e1"/><path d="M2.4 3.2L3.8 1.4L5.2 3.2Z M2.4 5.2L3.8 7L5.2 5.2Z" fill="#222"/></svg>
<div class="t " style="left:743px;top:250px;transform:translate(0.00px,0.50px) rotate(0.06deg);letter-spacing:0.017px;">Part name:</div>
<div class="cb" style="left:812px;top:249.9px;width:110px;height:9.5px;"></div>
<div class="t " style="left:814px;top:250px;transform:translate(0.70px,0.50px) rotate(0.06deg);">None</div>
<svg class="a" style="left:903.4px;top:252.6px" width="5" height="4" viewBox="0 0 5 4"><path d="M0.6 1L2.5 3L4.4 1" fill="none" stroke="#555" stroke-width="0.6"/></svg>
<div class="t " style="left:743px;top:263px;transform:translate(0.00px,0.70px) rotate(0.06deg);letter-spacing:0.144px;">Footprint name:</div>
<div class="cb" style="left:812px;top:263.1px;width:110px;height:9.5px;"></div>
<div class="t " style="left:814px;top:263px;transform:translate(0.70px,0.70px) rotate(0.06deg);">None</div>
<svg class="a" style="left:903.4px;top:265.8px" width="5" height="4" viewBox="0 0 5 4"><path d="M0.6 1L2.5 3L4.4 1" fill="none" stroke="#555" stroke-width="0.6"/></svg>
<div class="t " style="left:743px;top:277px;transform:translate(0.00px,0.20px) rotate(0.06deg);letter-spacing:0.173px;">Component height:</div>
<div class="cb" style="left:812px;top:276.5px;width:43.6px;height:9.7px;border-color:#b0b0b0"></div>
<div class="t " style="left:814px;top:277px;transform:translate(0.20px,0.20px) rotate(0.06deg);letter-spacing:-0.223px;">0.00000</div>
<svg class="a" style="left:847.4px;top:277.1px" width="7.6" height="8.4" viewBox="0 0 7.6 8.4"><rect x="0" y="0" width="7.6" height="8.4" fill="#e1e1e1"/><path d="M2.4 3.2L3.8 1.4L5.2 3.2Z M2.4 5.2L3.8 7L5.2 5.2Z" fill="#222"/></svg>
<div class="t " style="left:860px;top:277px;transform:translate(0.60px,0.20px) rotate(0.06deg);">-</div>
<div class="cb" style="left:866.9px;top:276.5px;width:44.5px;height:9.7px;border-color:#b0b0b0"></div>
<div class="t " style="left:869px;top:277px;transform:translate(0.10px,0.20px) rotate(0.06deg);letter-spacing:-0.223px;">0.00000</div>
<svg class="a" style="left:903.1999999999999px;top:277.1px" width="7.6" height="8.4" viewBox="0 0 7.6 8.4"><rect x="0" y="0" width="7.6" height="8.4" fill="#e1e1e1"/><path d="M2.4 3.2L3.8 1.4L5.2 3.2Z M2.4 5.2L3.8 7L5.2 5.2Z" fill="#222"/></svg>
<div class="t " style="left:743px;top:290px;transform:translate(0.00px,0.50px) rotate(0.06deg);letter-spacing:0.135px;">Key component:</div>
<div class="dd" style="left:812px;top:289.8px;width:110px;height:9.7px;"></div>
<div class="t " style="left:814px;top:290px;transform:translate(0.70px,0.50px) rotate(0.06deg);">None</div>
<svg class="a" style="left:903.40px;top:293.60px" width="3.8" height="2.3" viewBox="0 0 3.8 2.3"><path d="M0 0H3.8L1.9 2.3Z" fill="#1e1e1e"/></svg>
<div class="a" style="left:721.6px;top:307.7px;width:190px;height:0.6px;background:#cfcfcf"></div>
<div class="btn" style="left:745.3px;top:315.3px;width:36px;height:10.4px;line-height:9.200000000000001px;">Add...</div>
<div class="btn" style="left:785.4px;top:315.3px;width:35.6px;height:10.4px;line-height:9.200000000000001px;background:#d6d6d6;border-color:#c4c4c4;color:#9b9b9b;">Overwrite</div>
<div class="btn" style="left:825.2px;top:315.3px;width:35.7px;height:10.4px;line-height:9.200000000000001px;background:#d6d6d6;border-color:#c4c4c4;color:#9b9b9b;">Rename...</div>
<div class="btn" style="left:865.2px;top:315.3px;width:35.7px;height:10.4px;line-height:9.200000000000001px;background:#d6d6d6;border-color:#c4c4c4;color:#9b9b9b;">Delete</div>
<div class="a" style="left:713px;top:334.5px;width:197px;height:11.5px;background:linear-gradient(#eff2f9 0%,#dfe5f1 50%,#cdd5e7 100%);border-bottom:1px solid #b4bccd;border-top:1px solid #fafbfd"></div>
<svg class="a" style="left:717.2px;top:336px" width="9" height="8" viewBox="0 0 9 8"><path d="M2.2 0.8L0.9 7.2H3.7L3.5 0.8ZM5.5 0.8L5.3 7.2H8.1L6.8 0.8Z" fill="#e4ecf8" stroke="#233f8c" stroke-width="0.7"/><path d="M2.1 0.8H3.5V2.8H1.7ZM5.5 0.8H6.9L7.3 2.8H5.5Z" fill="#233f8c"/><path d="M3.6 3.4H5.4" stroke="#233f8c" stroke-width="1.3"/></svg>
<div class="t " style="left:727px;top:336px;transform:translate(0.50px,0.10px) rotate(0.06deg);letter-spacing:0.018px;color:#1a2fb0">Reference Designator list</div>
<div class="a" style="left:713px;top:346px;width:197px;height:148px;background:#ececec"></div>
<div class="a" style="left:715.2px;top:346.6px;width:200px;height:97.1px;background:#fff;border:0.6px solid #9c9c9c;overflow:hidden"></div>
<div class="t " style="left:718px;top:348px;transform:translate(0.40px,0.10px) rotate(0.06deg);letter-spacing:-0.327px;">C100</div>
<div class="t " style="left:718px;top:356px;transform:translate(0.40px,0.47px) rotate(0.06deg);letter-spacing:-0.327px;">C101</div>
<div class="t " style="left:718px;top:364px;transform:translate(0.40px,0.84px) rotate(0.06deg);letter-spacing:-0.327px;">C102</div>
<div class="t " style="left:718px;top:373px;transform:translate(0.40px,0.21px) rotate(0.06deg);letter-spacing:-0.327px;">C103</div>
<div class="t " style="left:718px;top:381px;transform:translate(0.40px,0.58px) rotate(0.06deg);letter-spacing:-0.327px;">C104</div>
<div class="t " style="left:718px;top:389px;transform:translate(0.40px,0.95px) rotate(0.06deg);letter-spacing:-0.327px;">C105</div>
<div class="t " style="left:718px;top:398px;transform:translate(0.40px,0.32px) rotate(0.06deg);letter-spacing:-0.327px;">C106</div>
<div class="t " style="left:718px;top:406px;transform:translate(0.40px,0.69px) rotate(0.06deg);letter-spacing:-0.327px;">C107</div>
<div class="t " style="left:718px;top:415px;transform:translate(0.40px,0.06px) rotate(0.06deg);letter-spacing:-0.327px;">C108</div>
<div class="t " style="left:718px;top:423px;transform:translate(0.40px,0.43px) rotate(0.06deg);letter-spacing:-0.327px;">C109</div>
<div class="t " style="left:718px;top:431px;transform:translate(0.40px,0.80px) rotate(0.06deg);letter-spacing:-0.222px;">C110</div>
<div class="t" style="left:718.4px;top:440.3px;height:3.2px;overflow:hidden;letter-spacing:0.12px">C111</div>
<div class="chk" style="left:718.4px;top:447.5px"></div>
<div class="t " style="left:727px;top:446px;transform:translate(0.50px,0.60px) rotate(0.06deg);letter-spacing:0.109px;">Move on selection</div>
<div class="chk" style="left:725.4px;top:459.5px;border-color:#d0d0d0"></div>
<div class="t dis" style="left:734px;top:458px;transform:translate(0.20px,0.60px) rotate(0.06deg);letter-spacing:0.075px;">Select next from list</div>
<div class="chk" style="left:725.4px;top:471.5px;border-color:#d0d0d0"></div>
<div class="t dis" style="left:734px;top:470px;transform:translate(0.20px,0.60px) rotate(0.06deg);letter-spacing:0.022px;">Placement side:</div>
<div class="a" style="left:780.5px;top:470px;width:28.9px;height:9.7px;background:#cbcbcb;border:0.5px solid #bdbdbd"></div>
<div class="t dis" style="left:783px;top:470px;transform:translate(0.00px,0.70px) rotate(0.06deg);letter-spacing:-0.128px;color:#8e8e8e">Side B</div>
<svg class="a" style="left:803.00px;top:474.20px" width="2.8" height="1.8" viewBox="0 0 2.8 1.8"><path d="M0 0H2.8L1.4 1.8Z" fill="#8a8a8a"/></svg>
<div class="btn" style="border-color:#cdcdcd;left:715.9px;top:482.8px;width:60.7px;height:10.2px;line-height:9.0px;">Cross Probe Settings...</div>
<div class="a" style="left:0px;top:494px;width:910px;height:16px;background:linear-gradient(#f3f4f7 0,#eef0f3 1.6px,#d6d9e1 2.6px,#d2d6de 4px)"></div>
<div class="a" style="left:0px;top:497.8px;width:7px;height:10.6px;background:#7c96cc;border:1px solid #e8c468;border-left:0"></div>
<svg class="a" style="left:0;top:499.6px" width="6" height="7" viewBox="0 0 6 7"><path d="M0 1H5V5.6H0M1.6 1V5.6M3.2 1V5.6" stroke="#fff" stroke-width="0.7" fill="none"/></svg>
<div class="a" style="left:7.4px;top:497.8px;width:6.6px;height:10.6px;background:linear-gradient(#fde4a0,#fbd26c);border:1px solid #f0cc74"></div>
<svg class="a" style="left:9.70px;top:502.40px" width="2.8" height="1.8" viewBox="0 0 2.8 1.8"><path d="M0 0H2.8L1.4 1.8Z" fill="#3a3f4a"/></svg>
<div class="t " style="left:22px;top:499px;transform:translate(0.00px,0.40px) rotate(0.06deg);letter-spacing:0.076px;">Units:</div>
<div class="dd" style="left:39.6px;top:498.8px;width:31.3px;height:8.6px;"></div>
<div class="t " style="left:41px;top:499px;transform:translate(0.60px,0.40px) rotate(0.06deg);">mm</div>
<svg class="a" style="left:65.80px;top:502.20px" width="3.8" height="2.3" viewBox="0 0 3.8 2.3"><path d="M0 0H3.8L1.9 2.3Z" fill="#1e1e1e"/></svg>
<div class="t " style="left:75px;top:499px;transform:translate(0.20px,0.40px) rotate(0.06deg);letter-spacing:-0.039px;">Decimal Places:</div>
<div class="dd" style="left:118px;top:498.8px;width:15.5px;height:8.6px;"></div>
<div class="t " style="left:120px;top:499px;transform:translate(0.00px,0.40px) rotate(0.06deg);">5</div>
<svg class="a" style="left:127.60px;top:502.20px" width="3.8" height="2.3" viewBox="0 0 3.8 2.3"><path d="M0 0H3.8L1.9 2.3Z" fill="#1e1e1e"/></svg>
<div class="a" style="left:143.6px;top:499.4px;width:3.8px;height:7px;background:#e8f4e0;border:0.9px solid #2f9a2f"></div>
<div class="t " style="left:151px;top:499px;transform:translate(0.70px,0.40px) rotate(0.06deg);letter-spacing:0.144px;">Conductor-1</div>
<svg class="a" style="left:187.5px;top:498.6px" width="11" height="9" viewBox="0 0 11 9"><path d="M1.6 1.2H8.6V5.4H1.6Z" fill="#fbe4e0" stroke="#d8321e" stroke-width="0.9"/><path d="M3.4 3.2H10V7.6H3.4Z" fill="#fbe4e0" stroke="#d8321e" stroke-width="0.9"/></svg>
<div class="t " style="left:210px;top:499px;transform:translate(0.20px,0.40px) rotate(0.06deg);color:#2a50d0;font-style:italic">?</div>
<div class="t " style="left:216px;top:499px;transform:translate(0.00px,0.40px) rotate(0.06deg);letter-spacing:0.322px;">- All ON -</div>
<div class="a" style="left:625.2px;top:502.3px;width:2.8px;height:2.8px;border-radius:50%;background:#23b14d"></div>
<div class="t " style="left:631px;top:499px;transform:translate(0.70px,0.80px) rotate(0.06deg);letter-spacing:0.057px;">High Speed</div>
<div class="a" style="left:667.8px;top:497.8px;width:11.5px;height:10.7px;background:linear-gradient(#fde9a8,#fbd56e);border:1px solid #ecc868"></div>
<svg class="a" style="left:667.8px;top:498px" width="11.5" height="10.5" viewBox="0 0 11.5 10.5"><path d="M2 3C5 2 7 4 7.6 7.6" stroke="#333" stroke-width="1.4" fill="none"/><path d="M2 3C5 2 7 4 7.6 7.6" stroke="#e0a020" stroke-width="0.6" fill="none"/></svg>
<div class="a" style="left:679.5999999999999px;top:497.8px;width:5.4px;height:10.7px;background:linear-gradient(#fde9a8,#fbd56e);border:1px solid #ecc868"></div>
<svg class="a" style="left:680.80px;top:502.60px" width="2.8" height="1.8" viewBox="0 0 2.8 1.8"><path d="M0 0H2.8L1.4 1.8Z" fill="#3a3f4a"/></svg>
<div class="a" style="left:692.5px;top:497.8px;width:10.7px;height:10.7px;background:linear-gradient(#fde9a8,#fbd56e);border:1px solid #ecc868"></div>
<svg class="a" style="left:692.5px;top:498px" width="10.7" height="10.5" viewBox="0 0 10.7 10.5"><path d="M2 2.6H7A2.6 2.6 0 0 1 7 7.8H2M3.4 1V9.4M2 5.2H8" stroke="#e0381c" stroke-width="0.9" fill="none"/></svg>
<div class="a" style="left:703.5px;top:497.8px;width:5.5px;height:10.7px;background:linear-gradient(#fde9a8,#fbd56e);border:1px solid #ecc868"></div>
<svg class="a" style="left:704.75px;top:502.60px" width="2.8" height="1.8" viewBox="0 0 2.8 1.8"><path d="M0 0H2.8L1.4 1.8Z" fill="#3a3f4a"/></svg>
<div class="a" style="left:712px;top:497.8px;width:10.5px;height:10.7px;background:linear-gradient(#fde9a8,#fbd56e);border:1px solid #ecc868"></div>
<svg class="a" style="left:712px;top:498px" width="10.5" height="10.5" viewBox="0 0 10.5 10.5"><rect x="2" y="2" width="7.6" height="6.4" fill="none" stroke="#c8381c" stroke-width="0.9"/><path d="M2 5.2H9.6M4 4L2.8 5.2L4 6.4M7.6 4L8.8 5.2L7.6 6.4" stroke="#c8381c" stroke-width="0.7" fill="none"/></svg>
<div class="a" style="left:722.8px;top:497.8px;width:5.9px;height:10.7px;background:linear-gradient(#fde9a8,#fbd56e);border:1px solid #ecc868"></div>
<svg class="a" style="left:724.25px;top:502.60px" width="2.8" height="1.8" viewBox="0 0 2.8 1.8"><path d="M0 0H2.8L1.4 1.8Z" fill="#3a3f4a"/></svg>
<div class="cb" style="left:735.3px;top:497.9px;width:41.3px;height:10.4px;border-color:#c6c8cc"></div>
<div class="t " style="left:738px;top:499px;transform:translate(0.50px,0.80px) rotate(0.06deg);letter-spacing:0.122px;color:#444">0.1mm</div>
<svg class="a" style="left:769.5px;top:501.9px" width="5" height="4" viewBox="0 0 5 4"><path d="M0.6 1L2.5 3L4.4 1" fill="none" stroke="#555" stroke-width="0.6"/></svg>
<div class="a" style="left:779.2px;top:497.8px;width:10px;height:10.7px;background:#c6c9cf;border:1px solid #ecc868"></div>
<svg class="a" style="left:779.2px;top:498px" width="10" height="10.5" viewBox="0 0 10 10.5"><rect x="1.6" y="1.6" width="6.8" height="7.2" fill="#c9ccd2" stroke="#666" stroke-width="0.7"/><path d="M5.2 1.8V5H8.4" stroke="#c8381c" stroke-width="0.9" fill="none"/><path d="M2 5H5.2" stroke="#555" stroke-width="0.7"/></svg>
<div class="a" style="left:789.5px;top:497.8px;width:5.9px;height:10.7px;background:linear-gradient(#fde9a8,#fbd56e);border:1px solid #ecc868"></div>
<svg class="a" style="left:790.95px;top:502.60px" width="2.8" height="1.8" viewBox="0 0 2.8 1.8"><path d="M0 0H2.8L1.4 1.8Z" fill="#3a3f4a"/></svg>
<div class="cb" style="left:798.5px;top:497.9px;width:40px;height:10.4px;border-color:#c6c8cc"></div>
<div class="t " style="left:801px;top:499px;transform:translate(0.50px,0.80px) rotate(0.06deg);letter-spacing:0.122px;color:#444">0.1mm</div>
<svg class="a" style="left:831.7px;top:501.9px" width="5" height="4" viewBox="0 0 5 4"><path d="M0.6 1L2.5 3L4.4 1" fill="none" stroke="#555" stroke-width="0.6"/></svg>
<svg class="a" style="left:842.6px;top:498.6px" width="9" height="9.6" viewBox="0 0 9 9.6"><rect x="0.6" y="0.8" width="7.4" height="8" fill="#e9edf3" stroke="#5a6478" stroke-width="0.7"/><path d="M2 2.4L4.4 4.8M2 2.4V4.4M2 2.4H4" stroke="#d8321e" stroke-width="0.9" fill="none"/><rect x="4.6" y="5" width="2.4" height="2.6" fill="#c8381c"/></svg>
<svg class="a" style="left:853.80px;top:502.80px" width="2.8" height="1.8" viewBox="0 0 2.8 1.8"><path d="M0 0H2.8L1.4 1.8Z" fill="#3a3f4a"/></svg>
<svg class="a" style="left:865.5px;top:498.8px" width="9" height="9" viewBox="0 0 9 9"><path d="M4.5 0.4L6 2.4H3ZM4.5 8.6L6 6.6H3ZM0.4 4.5L2.4 3V6ZM8.6 4.5L6.6 3V6Z" fill="#3a4a68"/><rect x="3.7" y="3.7" width="1.6" height="1.6" fill="#3a4a68"/></svg>
<svg class="a" style="left:877.80px;top:502.80px" width="2.8" height="1.8" viewBox="0 0 2.8 1.8"><path d="M0 0H2.8L1.4 1.8Z" fill="#3a3f4a"/></svg>
<div class="a" style="left:889.4px;top:497.8px;width:10.8px;height:10.7px;background:#fbe6a6;border:1px solid #f0d080"></div>
<svg class="a" style="left:890.4px;top:499.4px" width="9" height="8" viewBox="0 0 9 8"><path d="M2.2 0.8L0.9 7.2H3.7L3.5 0.8ZM5.5 0.8L5.3 7.2H8.1L6.8 0.8Z" fill="#e4ecf8" stroke="#233f8c" stroke-width="0.7"/><path d="M2.1 0.8H3.5V2.8H1.7ZM5.5 0.8H6.9L7.3 2.8H5.5Z" fill="#233f8c"/><path d="M3.6 3.4H5.4" stroke="#233f8c" stroke-width="1.3"/></svg>
<svg class="a" style="left:903.3px;top:499px" width="8" height="9" viewBox="0 0 8 9"><ellipse cx="3.6" cy="2.2" rx="2.8" ry="1.5" fill="#eef2f8" stroke="#5a6aa0" stroke-width="0.7"/><ellipse cx="4.6" cy="4.8" rx="4" ry="1.6" fill="#fbeef0" stroke="#d8305a" stroke-width="0.7"/><ellipse cx="4.6" cy="6.8" rx="4" ry="1.6" fill="#fbeef0" stroke="#d8305a" stroke-width="0.7"/></svg>
<div class="a" style="left:637.6px;top:476px;width:67.6px;height:13.8px;background:#474747"></div>
<div class="t " style="left:639px;top:479px;transform:translate(0.60px,0.30px) rotate(0.06deg);font-size:6.1px;font-weight:bold;letter-spacing:0.111px;color:#f6f6f6">(270.14294, 68.49466)</div>
</body></html>
